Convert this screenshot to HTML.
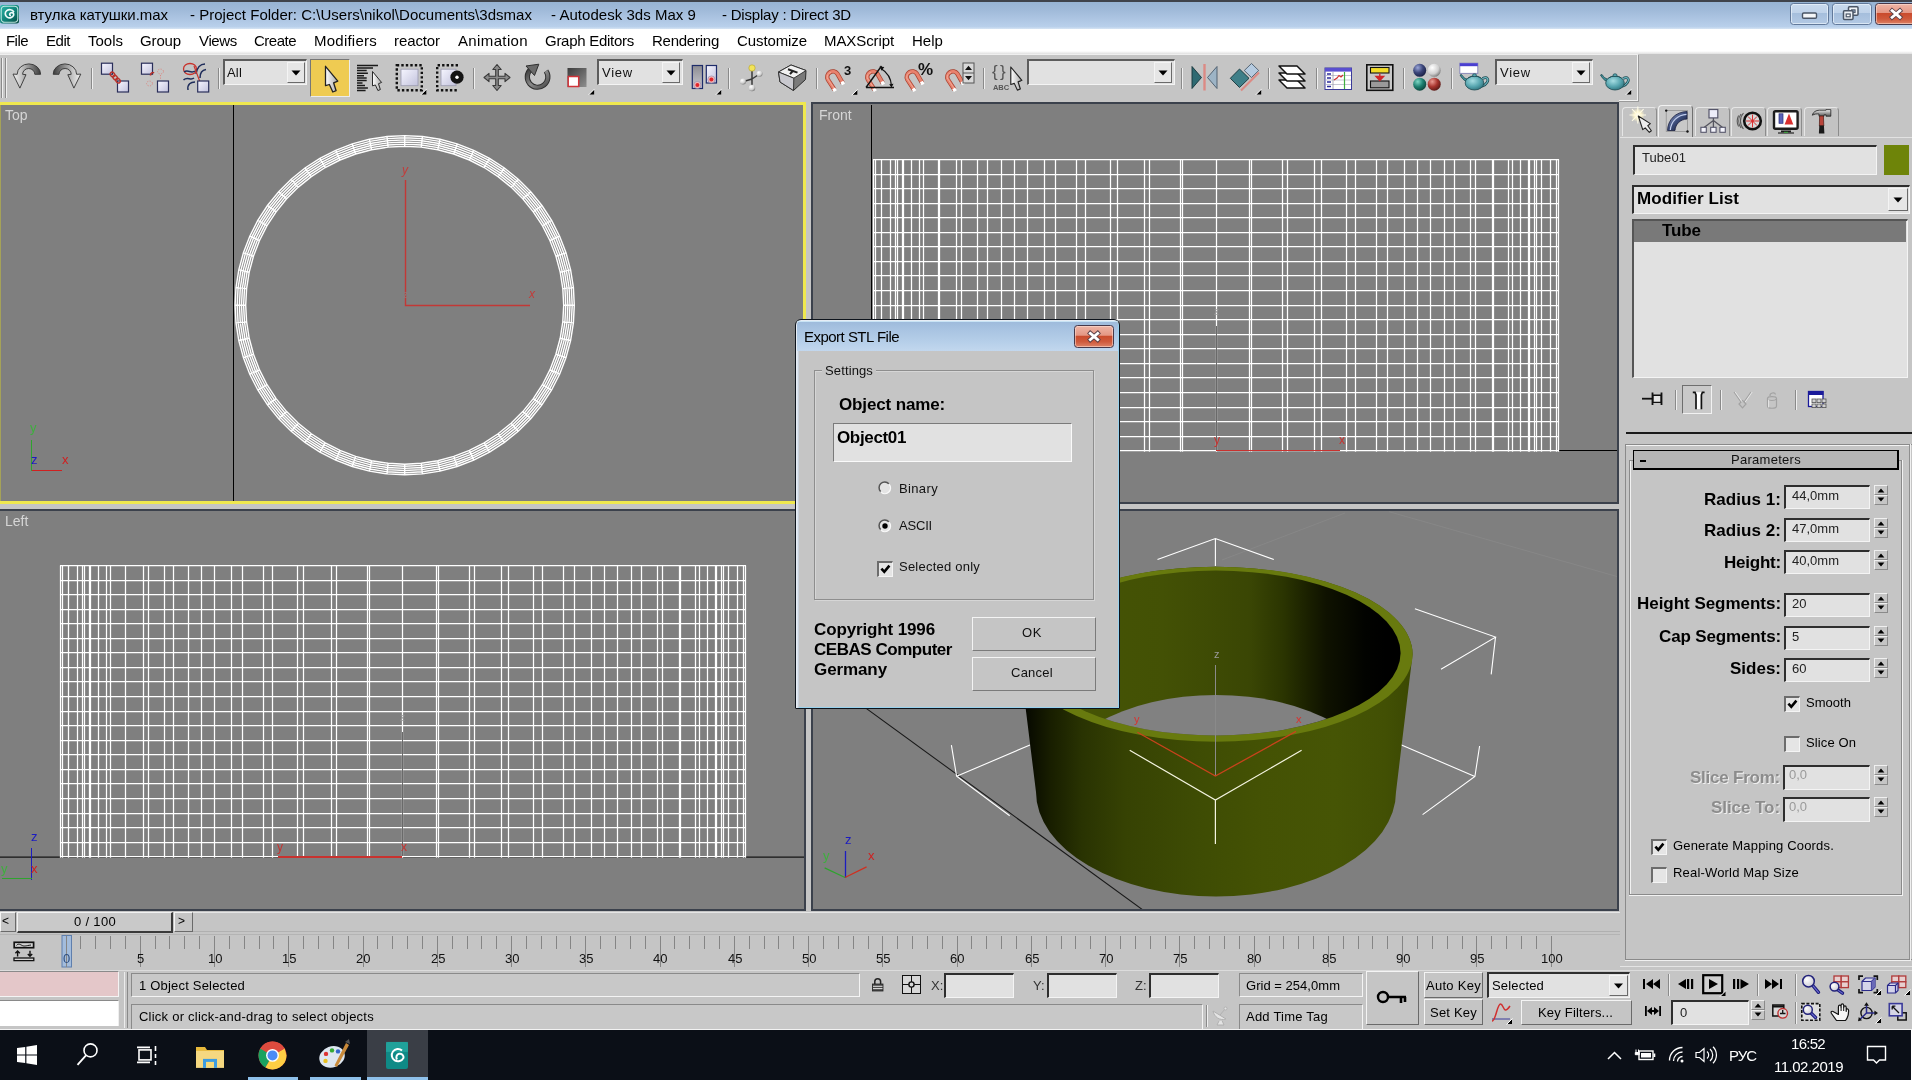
<!DOCTYPE html><html><head><meta charset="utf-8"><title>3ds Max</title><style>
html,body{margin:0;padding:0;}
body{width:1912px;height:1082px;overflow:hidden;position:relative;background:#c5c5c5;font-family:"Liberation Sans",sans-serif;}
.a{position:absolute;box-sizing:border-box;}
.t{position:absolute;white-space:nowrap;line-height:1;will-change:transform;}
svg{position:absolute;overflow:visible;}
.sunk{position:absolute;box-sizing:border-box;background:#e1e1e1;border-top:2px solid #2e2e2e;border-left:2px solid #2e2e2e;border-right:1px solid #f4f4f4;border-bottom:1px solid #f4f4f4;}
.raised{position:absolute;box-sizing:border-box;background:#c5c5c5;border-top:1px solid #f4f4f4;border-left:1px solid #f4f4f4;border-right:1px solid #6a6a6a;border-bottom:1px solid #6a6a6a;}
</style></head><body><div class="a" style="left:0px;top:0px;width:1912px;height:29px;background:linear-gradient(#95b2d2 0%,#a0bad9 35%,#afc7e4 70%,#b9d0eb 92%,#d6e4f3 100%);"></div>
<div class="a" style="left:0px;top:0px;width:1912px;height:1.6px;background:#3f434b;"></div>
<div class="a" style="left:0px;top:29px;width:1912px;height:25px;background:#ffffff;"></div>
<div class="a" style="left:0px;top:51px;width:1912px;height:3px;background:linear-gradient(#ffffff,#e0e0e0);"></div>
<div class="t" style="left:30px;top:7px;font-size:15px;color:#000;letter-spacing:-0.053px;">втулка катушки.max</div>
<div class="t" style="left:190px;top:7px;font-size:15px;color:#000;letter-spacing:0.020px;">- Project Folder: C:\Users\nikol\Documents\3dsmax</div>
<div class="t" style="left:551px;top:7px;font-size:15px;color:#000;letter-spacing:0.036px;">- Autodesk 3ds Max 9</div>
<div class="t" style="left:722px;top:7px;font-size:15px;color:#000;letter-spacing:-0.208px;">- Display : Direct 3D</div>
<div class="t" style="left:6px;top:33px;font-size:15px;color:#000;letter-spacing:-0.539px;">File</div>
<div class="t" style="left:46px;top:33px;font-size:15px;color:#000;letter-spacing:-0.461px;">Edit</div>
<div class="t" style="left:88px;top:33px;font-size:15px;color:#000;letter-spacing:-0.003px;">Tools</div>
<div class="t" style="left:140px;top:33px;font-size:15px;color:#000;letter-spacing:-0.141px;">Group</div>
<div class="t" style="left:199px;top:33px;font-size:15px;color:#000;letter-spacing:-0.347px;">Views</div>
<div class="t" style="left:254px;top:33px;font-size:15px;color:#000;letter-spacing:-0.505px;">Create</div>
<div class="t" style="left:314px;top:33px;font-size:15px;color:#000;letter-spacing:0.238px;">Modifiers</div>
<div class="t" style="left:394px;top:33px;font-size:15px;color:#000;letter-spacing:-0.100px;">reactor</div>
<div class="t" style="left:458px;top:33px;font-size:15px;color:#000;letter-spacing:0.366px;">Animation</div>
<div class="t" style="left:545px;top:33px;font-size:15px;color:#000;letter-spacing:-0.274px;">Graph Editors</div>
<div class="t" style="left:652px;top:33px;font-size:15px;color:#000;letter-spacing:-0.247px;">Rendering</div>
<div class="t" style="left:737px;top:33px;font-size:15px;color:#000;letter-spacing:-0.095px;">Customize</div>
<div class="t" style="left:824px;top:33px;font-size:15px;color:#000;letter-spacing:-0.094px;">MAXScript</div>
<div class="t" style="left:912px;top:33px;font-size:15px;color:#000;letter-spacing:0.039px;">Help</div>
<div class="a" style="left:-2px;top:102px;width:808px;height:402px;background:#7f7f7f;border:3px solid #efe84f;"></div>
<div class="a" style="left:0px;top:105px;width:1px;height:396px;background:#a5a258;"></div>
<div class="a" style="left:811px;top:102px;width:808px;height:402px;background:#7f7f7f;border:2px solid #3b414c;"></div>
<div class="a" style="left:-2px;top:509px;width:808px;height:402px;background:#7f7f7f;border:2px solid #3b414c;"></div>
<div class="a" style="left:811px;top:509px;width:808px;height:402px;background:#7f7f7f;border:2px solid #3b414c;"></div>
<div class="t" style="left:5px;top:108px;font-size:14px;color:#d6d6d6;">Top</div>
<div class="t" style="left:819px;top:108px;font-size:14px;color:#d6d6d6;">Front</div>
<div class="t" style="left:5px;top:514px;font-size:14px;color:#d6d6d6;">Left</div>
<svg style="left:2px;top:105px" width="801" height="396" viewBox="0 0 801 396" ><path d="M231.5 0V396" stroke="#000" stroke-width="1.4" shape-rendering="crispEdges"/><path d="M561.7 200.2L560.8 216.8L558.2 233.3L553.9 249.3L547.9 264.9L540.4 279.7L531.3 293.6L520.8 306.6L509.1 318.3L496.1 328.8L482.2 337.9L467.4 345.4L451.8 351.4L435.8 355.7L419.3 358.3L402.7 359.2L386.1 358.3L369.6 355.7L353.6 351.4L338.0 345.4L323.2 337.9L309.3 328.8L296.3 318.3L284.6 306.6L274.1 293.6L265.0 279.7L257.5 264.9L251.5 249.3L247.2 233.3L244.6 216.8L243.7 200.2L244.6 183.6L247.2 167.1L251.5 151.1L257.5 135.5L265.0 120.7L274.1 106.8L284.6 93.8L296.3 82.1L309.3 71.6L323.2 62.5L338.0 55.0L353.6 49.0L369.6 44.7L386.1 42.1L402.7 41.2L419.3 42.1L435.8 44.7L451.8 49.0L467.4 55.0L482.2 62.5L496.1 71.6L509.1 82.1L520.8 93.8L531.3 106.8L540.4 120.7L547.9 135.5L553.9 151.1L558.2 167.1L560.8 183.6ZM563.8 200.2L562.9 217.0L560.3 233.7L555.9 250.0L549.9 265.7L542.2 280.7L533.0 294.9L522.4 308.0L510.5 319.9L497.4 330.5L483.2 339.7L468.2 347.4L452.5 353.4L436.2 357.8L419.5 360.4L402.7 361.3L385.9 360.4L369.2 357.8L352.9 353.4L337.2 347.4L322.2 339.7L308.0 330.5L294.9 319.9L283.0 308.0L272.4 294.9L263.2 280.7L255.5 265.7L249.5 250.0L245.1 233.7L242.5 217.0L241.6 200.2L242.5 183.4L245.1 166.7L249.5 150.4L255.5 134.7L263.2 119.7L272.4 105.5L283.0 92.4L294.9 80.5L308.0 69.9L322.2 60.7L337.2 53.0L352.9 47.0L369.2 42.6L385.9 40.0L402.7 39.1L419.5 40.0L436.2 42.6L452.5 47.0L468.2 53.0L483.2 60.7L497.4 69.9L510.5 80.5L522.4 92.4L533.0 105.5L542.2 119.7L549.9 134.7L555.9 150.4L560.3 166.7L562.9 183.4ZM565.9 200.2L565.0 217.3L562.4 234.1L557.9 250.6L551.8 266.6L544.1 281.8L534.8 296.1L524.0 309.4L511.9 321.5L498.6 332.3L484.3 341.6L469.1 349.3L453.1 355.4L436.6 359.9L419.8 362.5L402.7 363.4L385.6 362.5L368.8 359.9L352.3 355.4L336.3 349.3L321.1 341.6L306.8 332.3L293.5 321.5L281.4 309.4L270.6 296.1L261.3 281.8L253.6 266.6L247.5 250.6L243.0 234.1L240.4 217.3L239.5 200.2L240.4 183.1L243.0 166.3L247.5 149.8L253.6 133.8L261.3 118.6L270.6 104.3L281.4 91.0L293.5 78.9L306.8 68.1L321.1 58.8L336.3 51.1L352.3 45.0L368.8 40.5L385.6 37.9L402.7 37.0L419.8 37.9L436.6 40.5L453.1 45.0L469.1 51.1L484.3 58.8L498.6 68.1L511.9 78.9L524.0 91.0L534.8 104.3L544.1 118.6L551.8 133.8L557.9 149.8L562.4 166.3L565.0 183.1ZM568.0 200.2L567.1 217.5L564.4 234.6L560.0 251.3L553.8 267.5L545.9 282.9L536.5 297.4L525.6 310.8L513.3 323.1L499.9 334.0L485.4 343.4L470.0 351.3L453.8 357.5L437.1 361.9L420.0 364.6L402.7 365.5L385.4 364.6L368.3 361.9L351.6 357.5L335.4 351.3L320.0 343.4L305.5 334.0L292.1 323.1L279.8 310.8L268.9 297.4L259.5 282.9L251.6 267.5L245.4 251.3L241.0 234.6L238.3 217.5L237.4 200.2L238.3 182.9L241.0 165.8L245.4 149.1L251.6 132.9L259.5 117.5L268.9 103.0L279.8 89.6L292.1 77.3L305.5 66.4L320.0 57.0L335.4 49.1L351.6 42.9L368.3 38.5L385.4 35.8L402.7 34.9L420.0 35.8L437.1 38.5L453.8 42.9L470.0 49.1L485.4 57.0L499.9 66.4L513.3 77.3L525.6 89.6L536.5 103.0L545.9 117.5L553.8 132.9L560.0 149.1L564.4 165.8L567.1 182.9ZM570.2 200.2L569.3 217.7L566.5 235.0L562.0 252.0L555.7 268.3L547.7 283.9L538.2 298.6L527.2 312.3L514.8 324.7L501.1 335.7L486.4 345.2L470.8 353.2L454.5 359.5L437.5 364.0L420.2 366.8L402.7 367.7L385.2 366.8L367.9 364.0L350.9 359.5L334.6 353.2L319.0 345.2L304.3 335.7L290.6 324.7L278.2 312.3L267.2 298.6L257.7 283.9L249.7 268.3L243.4 252.0L238.9 235.0L236.1 217.7L235.2 200.2L236.1 182.7L238.9 165.4L243.4 148.4L249.7 132.1L257.7 116.5L267.2 101.8L278.2 88.1L290.6 75.7L304.3 64.7L319.0 55.2L334.6 47.2L350.9 40.9L367.9 36.4L385.2 33.6L402.7 32.7L420.2 33.6L437.5 36.4L454.5 40.9L470.8 47.2L486.4 55.2L501.1 64.7L514.8 75.7L527.2 88.1L538.2 101.8L547.7 116.5L555.7 132.1L562.0 148.4L566.5 165.4L569.3 182.7ZM572.3 200.2L571.4 217.9L568.6 235.5L564.0 252.6L557.6 269.2L549.6 285.0L539.9 299.9L528.7 313.7L516.2 326.2L502.4 337.4L487.5 347.1L471.7 355.1L455.1 361.5L438.0 366.1L420.4 368.9L402.7 369.8L385.0 368.9L367.4 366.1L350.3 361.5L333.7 355.1L317.9 347.1L303.0 337.4L289.2 326.2L276.7 313.7L265.5 299.9L255.8 285.0L247.8 269.2L241.4 252.6L236.8 235.5L234.0 217.9L233.1 200.2L234.0 182.5L236.8 164.9L241.4 147.8L247.8 131.2L255.8 115.4L265.5 100.5L276.7 86.7L289.2 74.2L303.0 63.0L317.9 53.3L333.7 45.3L350.3 38.9L367.4 34.3L385.0 31.5L402.7 30.6L420.4 31.5L438.0 34.3L455.1 38.9L471.7 45.3L487.5 53.3L502.4 63.0L516.2 74.2L528.7 86.7L539.9 100.5L549.6 115.4L557.6 131.2L564.0 147.8L568.6 164.9L571.4 182.5ZM561.7 200.2L572.3 200.2M560.8 216.8L571.4 217.9M558.2 233.3L568.6 235.5M553.9 249.3L564.0 252.6M547.9 264.9L557.6 269.2M540.4 279.7L549.6 285.0M531.3 293.6L539.9 299.9M520.8 306.6L528.7 313.7M509.1 318.3L516.2 326.2M496.1 328.8L502.4 337.4M482.2 337.9L487.5 347.1M467.4 345.4L471.7 355.1M451.8 351.4L455.1 361.5M435.8 355.7L438.0 366.1M419.3 358.3L420.4 368.9M402.7 359.2L402.7 369.8M386.1 358.3L385.0 368.9M369.6 355.7L367.4 366.1M353.6 351.4L350.3 361.5M338.0 345.4L333.7 355.1M323.2 337.9L317.9 347.1M309.3 328.8L303.0 337.4M296.3 318.3L289.2 326.2M284.6 306.6L276.7 313.7M274.1 293.6L265.5 299.9M265.0 279.7L255.8 285.0M257.5 264.9L247.8 269.2M251.5 249.3L241.4 252.6M247.2 233.3L236.8 235.5M244.6 216.8L234.0 217.9M243.7 200.2L233.1 200.2M244.6 183.6L234.0 182.5M247.2 167.1L236.8 164.9M251.5 151.1L241.4 147.8M257.5 135.5L247.8 131.2M265.0 120.7L255.8 115.4M274.1 106.8L265.5 100.5M284.6 93.8L276.7 86.7M296.3 82.1L289.2 74.2M309.3 71.6L303.0 63.0M323.2 62.5L317.9 53.3M338.0 55.0L333.7 45.3M353.6 49.0L350.3 38.9M369.6 44.7L367.4 34.3M386.1 42.1L385.0 31.5M402.7 41.2L402.7 30.6M419.3 42.1L420.4 31.5M435.8 44.7L438.0 34.3M451.8 49.0L455.1 38.9M467.4 55.0L471.7 45.3M482.2 62.5L487.5 53.3M496.1 71.6L502.4 63.0M509.1 82.1L516.2 74.2M520.8 93.8L528.7 86.7M531.3 106.8L539.9 100.5M540.4 120.7L549.6 115.4M547.9 135.5L557.6 131.2M553.9 151.1L564.0 147.8M558.2 167.1L568.6 164.9M560.8 183.6L571.4 182.5" stroke="#fff" stroke-width="1.42" fill="none"/><path d="M403.5 75V200.5H528" stroke="#c23836" stroke-width="1.4" fill="none"/></svg>
<div class="t" style="left:402px;top:164px;font-size:12px;color:#c23c3a;font-style:italic;">y</div>
<div class="t" style="left:529px;top:288px;font-size:12px;color:#c23c3a;font-style:italic;">x</div>
<div class="t" style="left:403px;top:290px;font-size:10px;color:#8f7a7a;">z</div>
<svg style="left:0px;top:0px" width="100" height="500" viewBox="0 0 100 500" ><path d="M31.5 440V471" stroke="#2fa32f" stroke-width="1" shape-rendering="crispEdges"/><path d="M32 470.5H62" stroke="#d02020" stroke-width="1" shape-rendering="crispEdges"/></svg>
<div class="t" style="left:30px;top:421px;font-size:13px;color:#3fae3f;">y</div>
<div class="t" style="left:31px;top:453px;font-size:13px;color:#1c1cc0;">z</div>
<div class="t" style="left:62px;top:453px;font-size:13px;color:#d02020;">x</div>
<svg style="left:813px;top:105px" width="804" height="396" viewBox="0 0 804 396" ><path d="M58.5 0V396" stroke="#000" stroke-width="1.4" shape-rendering="crispEdges"/><path d="M58 345.5H804" stroke="#000" stroke-width="1.4" shape-rendering="crispEdges"/><path d="M60.5 54.5V346.7M62.5 54.5V346.7M68.5 54.5V346.7M77.5 54.5V346.7M82.5 54.5V346.7M84.5 54.5V346.7M89.5 54.5V346.7M90.5 54.5V346.7M98.5 54.5V346.7M106.5 54.5V346.7M110.5 54.5V346.7M125.5 54.5V346.7M126.5 54.5V346.7M143.5 54.5V346.7M148.5 54.5V346.7M164.5 54.5V346.7M174.5 54.5V346.7M188.5 54.5V346.7M201.5 54.5V346.7M214.5 54.5V346.7M231.5 54.5V346.7M242.5 54.5V346.7M263.5 54.5V346.7M272.5 54.5V346.7M297.5 54.5V346.7M304.5 54.5V346.7M331.5 54.5V346.7M336.5 54.5V346.7M367.5 54.5V346.7M369.5 54.5V346.7M403.5 54.5V346.7M436.5 54.5V346.7M438.5 54.5V346.7M469.5 54.5V346.7M474.5 54.5V346.7M501.5 54.5V346.7M508.5 54.5V346.7M533.5 54.5V346.7M542.5 54.5V346.7M563.5 54.5V346.7M574.5 54.5V346.7M591.5 54.5V346.7M604.5 54.5V346.7M617.5 54.5V346.7M631.5 54.5V346.7M641.5 54.5V346.7M657.5 54.5V346.7M662.5 54.5V346.7M679.5 54.5V346.7M680.5 54.5V346.7M695.5 54.5V346.7M699.5 54.5V346.7M707.5 54.5V346.7M715.5 54.5V346.7M716.5 54.5V346.7M721.5 54.5V346.7M723.5 54.5V346.7M728.5 54.5V346.7M737.5 54.5V346.7M743.5 54.5V346.7M745.5 54.5V346.7M60 54.5H746M60 69.5H746M60 83.5H746M60 98.5H746M60 112.5H746M60 127.5H746M60 141.5H746M60 156.5H746M60 170.5H746M60 185.5H746M60 200.5H746M60 214.5H746M60 229.5H746M60 243.5H746M60 258.5H746M60 272.5H746M60 287.5H746M60 302.5H746M60 316.5H746M60 331.5H746M60 345.5H746" stroke="#fff" stroke-width="1.25" fill="none"/><path d="M403.5 221V345" stroke="#6a6a6a" stroke-width="1" shape-rendering="crispEdges"/><path d="M403 345.5H527" stroke="#c8322f" stroke-width="1.4" shape-rendering="crispEdges"/></svg>
<div class="t" style="left:1214px;top:434px;font-size:12px;color:#c8322f;">y</div>
<div class="t" style="left:1339px;top:434px;font-size:12px;color:#c8322f;">x</div>
<div class="t" style="left:1214px;top:307px;font-size:10px;color:#9a9a9a;">z</div>
<svg style="left:0px;top:511px" width="804" height="398" viewBox="0 0 804 398" ><path d="M0 346.2H804" stroke="#151515" stroke-width="1.2"/><path d="M60.5 54.5V346.7M62.5 54.5V346.7M68.5 54.5V346.7M77.5 54.5V346.7M82.5 54.5V346.7M84.5 54.5V346.7M89.5 54.5V346.7M90.5 54.5V346.7M98.5 54.5V346.7M106.5 54.5V346.7M110.5 54.5V346.7M125.5 54.5V346.7M143.5 54.5V346.7M148.5 54.5V346.7M164.5 54.5V346.7M173.5 54.5V346.7M188.5 54.5V346.7M201.5 54.5V346.7M214.5 54.5V346.7M231.5 54.5V346.7M242.5 54.5V346.7M263.5 54.5V346.7M272.5 54.5V346.7M297.5 54.5V346.7M303.5 54.5V346.7M331.5 54.5V346.7M336.5 54.5V346.7M367.5 54.5V346.7M369.5 54.5V346.7M402.5 54.5V346.7M436.5 54.5V346.7M438.5 54.5V346.7M469.5 54.5V346.7M474.5 54.5V346.7M501.5 54.5V346.7M508.5 54.5V346.7M533.5 54.5V346.7M542.5 54.5V346.7M563.5 54.5V346.7M574.5 54.5V346.7M591.5 54.5V346.7M604.5 54.5V346.7M617.5 54.5V346.7M631.5 54.5V346.7M641.5 54.5V346.7M657.5 54.5V346.7M662.5 54.5V346.7M679.5 54.5V346.7M680.5 54.5V346.7M695.5 54.5V346.7M699.5 54.5V346.7M707.5 54.5V346.7M715.5 54.5V346.7M716.5 54.5V346.7M721.5 54.5V346.7M723.5 54.5V346.7M728.5 54.5V346.7M737.5 54.5V346.7M743.5 54.5V346.7M745.5 54.5V346.7M60 54.5H746M60 69.5H746M60 83.5H746M60 98.5H746M60 112.5H746M60 127.5H746M60 141.5H746M60 156.5H746M60 170.5H746M60 185.5H746M60 200.5H746M60 214.5H746M60 229.5H746M60 243.5H746M60 258.5H746M60 272.5H746M60 287.5H746M60 302.5H746M60 316.5H746M60 331.5H746M60 345.5H746" stroke="#fff" stroke-width="1.25" fill="none"/><path d="M402.5 221V345" stroke="#6a6a6a" stroke-width="1" shape-rendering="crispEdges"/><path d="M278 346H402" stroke="#c8322f" stroke-width="1.4" shape-rendering="crispEdges"/><path d="M31.5 337V369" stroke="#1c1cc0" stroke-width="1.3" shape-rendering="crispEdges"/><path d="M2 367.5H32" stroke="#2fa32f" stroke-width="1.3" shape-rendering="crispEdges"/></svg>
<div class="t" style="left:277px;top:841px;font-size:12px;color:#c8322f;">y</div>
<div class="t" style="left:401px;top:841px;font-size:12px;color:#c8322f;">x</div>
<div class="t" style="left:400px;top:713px;font-size:10px;color:#9a9a9a;">z</div>
<div class="t" style="left:31px;top:830px;font-size:13px;color:#1c1cc0;">z</div>
<div class="t" style="left:1px;top:862px;font-size:13px;color:#3fae3f;">y</div>
<div class="t" style="left:31px;top:862px;font-size:13px;color:#d02020;">x</div>
<svg style="left:813px;top:511px" width="804" height="398" viewBox="0 0 804 398" ><defs><linearGradient id="gOut" gradientUnits="userSpaceOnUse" x1="206" y1="0" x2="600" y2="0"><stop offset="0" stop-color="#000000"/><stop offset="0.03" stop-color="#0a0d00"/><stop offset="0.08" stop-color="#181e00"/><stop offset="0.16" stop-color="#293302"/><stop offset="0.27" stop-color="#364203"/><stop offset="0.45" stop-color="#3e4c04"/><stop offset="0.62" stop-color="#445204"/><stop offset="0.8" stop-color="#465505"/><stop offset="0.93" stop-color="#425004"/><stop offset="1" stop-color="#3b4803"/></linearGradient><linearGradient id="gIn" gradientUnits="userSpaceOnUse" x1="221" y1="0" x2="587" y2="0"><stop offset="0" stop-color="#465505"/><stop offset="0.35" stop-color="#435105"/><stop offset="0.59" stop-color="#3a4604"/><stop offset="0.68" stop-color="#2b3501"/><stop offset="0.749" stop-color="#1a2000"/><stop offset="0.798" stop-color="#0f1200"/><stop offset="0.904" stop-color="#020300"/><stop offset="0.96" stop-color="#000000"/><stop offset="1" stop-color="#000000"/></linearGradient><clipPath id="cIn"><ellipse cx="402.8" cy="142" rx="184.8" ry="82.4"/></clipPath><clipPath id="cVp"><rect x="0" y="0" width="804" height="398"/></clipPath></defs><g clip-path="url(#cVp)"><path d="M576.0 0.7 L804.0 65.5 M532.0 2.0 L409.0 49.0" stroke="#878787" stroke-width="1" fill="none"/><path d="M0.0 158.6 L332.0 400.5" stroke="#181818" stroke-width="1.05"/><path d="M344.5 48.5 L402.4 27.5 L460.8 48.5 M402.4 27.5 L402.4 55.0" stroke="#fff" stroke-width="1.1" fill="none"/><path d="M138.4 234.1 L143.6 265.3 L196.7 304.8 M143.6 265.3 L217.0 234.0" stroke="#fff" stroke-width="1.1" fill="none"/><path d="M601.9 97.8 L682.5 126.1 L628.0 158.3 M682.5 126.1 L678.2 163.4" stroke="#fff" stroke-width="1.1" fill="none"/><path d="M666.6 235.0 L661.9 265.5 L609.6 303.6 M661.9 265.5 L585.0 232.5" stroke="#fff" stroke-width="1.1" fill="none"/><path d="M206.0 143.2 L223.0 281.0 A180 104.4 0 0 0 583.0 281.0 L599.6 143.2 A196.8 87.5 0 0 0 206.0 143.2 Z" fill="url(#gOut)"/><ellipse cx="402.8" cy="143.2" rx="196.8" ry="87.5" fill="#687a0e"/><ellipse cx="402.8" cy="142" rx="184.8" ry="82.4" fill="url(#gIn)"/><ellipse cx="403" cy="280" rx="168" ry="96" fill="#818181" clip-path="url(#cIn)"/><path d="M402.5 154.0 L402.5 265.0" stroke="#8a8a8a" stroke-width="1"/><path d="M324.4 221.3 L402.4 265.0 L483.0 220.4" stroke="#c8431c" stroke-width="1.3" fill="none"/><path d="M316.7 239.3 L402.4 289.0 L488.6 239.3 M402.4 289.0 L402.4 333.0" stroke="#f4f4e0" stroke-width="1.2" fill="none"/><path d="M32.5 340.0 L32.5 367.0" stroke="#1c1cc0" stroke-width="1.3"/><path d="M32.0 366.5 L53.6 355.8" stroke="#d03020" stroke-width="1.3"/><path d="M32.0 366.5 L11.6 356.8" stroke="#2fa32f" stroke-width="1.3"/></g></svg>
<div class="t" style="left:1214px;top:649px;font-size:11px;color:#9a9a9a;">z</div>
<div class="t" style="left:1134px;top:714px;font-size:11px;color:#d8322f;">y</div>
<div class="t" style="left:1296px;top:714px;font-size:11px;color:#d8322f;">x</div>
<div class="t" style="left:845px;top:833px;font-size:13px;color:#1c1cc0;">z</div>
<div class="t" style="left:823px;top:849px;font-size:13px;color:#3fae3f;">y</div>
<div class="t" style="left:868px;top:849px;font-size:13px;color:#d02020;">x</div>
<div class="a" style="left:1626px;top:432px;width:286px;height:2px;background:#1a1a1a;"></div>
<div class="a" style="left:1622.1px;top:107px;width:35px;height:29px;background:#c3c3c3;border:1px solid #e6e6e6;border-right:1.5px solid #8c8c8c;border-bottom:none;border-radius:4px 4px 0 0;"></div>
<div class="a" style="left:1658.4px;top:104.5px;width:35px;height:32px;background:#c8c8c8;border:1px solid #f2f2f2;border-right:1.5px solid #6f6f6f;border-bottom:none;border-radius:4px 4px 0 0;"></div>
<div class="a" style="left:1694.7px;top:107px;width:35px;height:29px;background:#c3c3c3;border:1px solid #e6e6e6;border-right:1.5px solid #8c8c8c;border-bottom:none;border-radius:4px 4px 0 0;"></div>
<div class="a" style="left:1731px;top:107px;width:35px;height:29px;background:#c3c3c3;border:1px solid #e6e6e6;border-right:1.5px solid #8c8c8c;border-bottom:none;border-radius:4px 4px 0 0;"></div>
<div class="a" style="left:1767.3px;top:107px;width:35px;height:29px;background:#c3c3c3;border:1px solid #e6e6e6;border-right:1.5px solid #8c8c8c;border-bottom:none;border-radius:4px 4px 0 0;"></div>
<div class="a" style="left:1803.6px;top:107px;width:35px;height:29px;background:#c3c3c3;border:1px solid #e6e6e6;border-right:1.5px solid #8c8c8c;border-bottom:none;border-radius:4px 4px 0 0;"></div>
<div class="a" style="left:1620px;top:136.5px;width:292px;height:1px;background:#e2e2e2;"></div>
<div class="sunk" style="left:1633px;top:145px;width:244px;height:30px;background:#e1e1e1"></div>
<div class="t" style="left:1642px;top:151px;font-size:13px;color:#222;letter-spacing:0.062px;">Tube01</div>
<div class="a" style="left:1884px;top:145px;width:25px;height:30px;background:#6e8409;"></div>
<div class="sunk" style="left:1632px;top:185px;width:278px;height:29px;background:#e1e1e1"></div>
<div class="t" style="left:1637px;top:190px;font-size:17px;color:#000;font-weight:bold;letter-spacing:0.075px;">Modifier List</div>
<div class="raised" style="left:1888px;top:188px;width:20px;height:23px;background:#e6e6e6;"></div><svg style="left:1888px;top:188px" width="20" height="23" viewBox="0 0 20 23" ><path d="M5.5 9.5L14.5 9.5L10 14.5Z" fill="#000"/></svg>
<div class="a" style="left:1632px;top:219px;width:276px;height:159px;background:#e1e1e1;border-top:2px solid #555;border-left:2px solid #555;border-right:1px solid #f4f4f4;border-bottom:1px solid #f4f4f4;"></div>
<div class="a" style="left:1634px;top:221px;width:272px;height:21px;background:#797979;"></div>
<div class="t" style="left:1662px;top:222px;font-size:17px;color:#000;font-weight:bold;letter-spacing:-0.090px;">Tube</div>
<div class="a" style="left:1682px;top:385px;width:30px;height:29px;background:#c9c9c9;border-top:1px solid #6e6e6e;border-left:1px solid #6e6e6e;border-right:1px solid #f2f2f2;border-bottom:1px solid #f2f2f2;"></div>
<div class="a" style="left:1674.5px;top:390px;width:1px;height:20px;background:#8a8a8a;"></div>
<div class="a" style="left:1675.5px;top:390px;width:1px;height:20px;background:#efefef;"></div>
<div class="a" style="left:1720px;top:390px;width:1px;height:20px;background:#8a8a8a;"></div>
<div class="a" style="left:1721px;top:390px;width:1px;height:20px;background:#efefef;"></div>
<div class="a" style="left:1794.5px;top:390px;width:1px;height:20px;background:#8a8a8a;"></div>
<div class="a" style="left:1795.5px;top:390px;width:1px;height:20px;background:#efefef;"></div>
<div class="a" style="left:1625px;top:444px;width:290px;height:516px;background:transparent;border:1px solid #8a8a8a;border-right:none;"></div>
<div class="a" style="left:1626px;top:445px;width:284px;height:1px;background:#f2f2f2;"></div>
<div class="a" style="left:1909px;top:445px;width:1px;height:514px;background:#8f8f8f;"></div>
<div class="a" style="left:1910px;top:444px;width:1px;height:517px;background:#f0f0f0;"></div>
<div class="a" style="left:1625px;top:960px;width:286px;height:1px;background:#f0f0f0;"></div>
<div class="a" style="left:1620px;top:966px;width:292px;height:1px;background:#e4e4e4;"></div>
<div class="a" style="left:1629px;top:460px;width:273px;height:435px;background:transparent;border:1px solid #8a8a8a;"></div>
<div class="a" style="left:1630px;top:461px;width:1px;height:433px;background:#f2f2f2;"></div>
<div class="a" style="left:1629px;top:895px;width:274px;height:1px;background:#f2f2f2;"></div>
<div class="a" style="left:1902px;top:460px;width:1px;height:436px;background:#f2f2f2;"></div>
<div class="a" style="left:1633px;top:450px;width:266px;height:20px;background:#b5b5b5;border:1px solid #000;border-bottom:2px solid #000;border-right:2px solid #000;"></div>
<div class="t" style="left:1731px;top:453px;font-size:13px;color:#111;letter-spacing:0.280px;">Parameters</div>
<div class="a" style="left:1640px;top:460px;width:6px;height:1.5px;background:#000;"></div>
<div class="t" style="left:1704px;top:491px;font-size:17px;color:#000;font-weight:bold;letter-spacing:0.054px;">Radius 1:</div>
<div class="sunk" style="left:1784px;top:485px;width:86px;height:24px;background:#e1e1e1"></div>
<div class="t" style="left:1792px;top:489px;font-size:13px;color:#222;">44,0mm</div>
<div class="raised" style="left:1873.5px;top:485px;width:14px;height:10px;border-color:#f0f0f0 #8a8a8a #8a8a8a #f0f0f0;"></div><div class="raised" style="left:1873.5px;top:495px;width:14px;height:10px;border-color:#f0f0f0 #8a8a8a #8a8a8a #f0f0f0;"></div><svg style="left:1873.5px;top:485px" width="14" height="20" viewBox="0 0 14 20" ><path d="M3.6 7.4L7 3.6L10.4 7.4Z M3.6 12.6L7 16.4L10.4 12.6Z" fill="#000"/></svg>
<div class="t" style="left:1704px;top:521.5px;font-size:17px;color:#000;font-weight:bold;letter-spacing:0.054px;">Radius 2:</div>
<div class="sunk" style="left:1784px;top:518px;width:86px;height:24px;background:#e1e1e1"></div>
<div class="t" style="left:1792px;top:522px;font-size:13px;color:#222;">47,0mm</div>
<div class="raised" style="left:1873.5px;top:518px;width:14px;height:10px;border-color:#f0f0f0 #8a8a8a #8a8a8a #f0f0f0;"></div><div class="raised" style="left:1873.5px;top:528px;width:14px;height:10px;border-color:#f0f0f0 #8a8a8a #8a8a8a #f0f0f0;"></div><svg style="left:1873.5px;top:518px" width="14" height="20" viewBox="0 0 14 20" ><path d="M3.6 7.4L7 3.6L10.4 7.4Z M3.6 12.6L7 16.4L10.4 12.6Z" fill="#000"/></svg>
<div class="t" style="left:1724px;top:553.5px;font-size:17px;color:#000;font-weight:bold;letter-spacing:-0.221px;">Height:</div>
<div class="sunk" style="left:1784px;top:550px;width:86px;height:24px;background:#e1e1e1"></div>
<div class="t" style="left:1792px;top:554px;font-size:13px;color:#222;">40,0mm</div>
<div class="raised" style="left:1873.5px;top:550px;width:14px;height:10px;border-color:#f0f0f0 #8a8a8a #8a8a8a #f0f0f0;"></div><div class="raised" style="left:1873.5px;top:560px;width:14px;height:10px;border-color:#f0f0f0 #8a8a8a #8a8a8a #f0f0f0;"></div><svg style="left:1873.5px;top:550px" width="14" height="20" viewBox="0 0 14 20" ><path d="M3.6 7.4L7 3.6L10.4 7.4Z M3.6 12.6L7 16.4L10.4 12.6Z" fill="#000"/></svg>
<div class="t" style="left:1637px;top:595px;font-size:17px;color:#000;font-weight:bold;letter-spacing:-0.032px;">Height Segments:</div>
<div class="sunk" style="left:1784px;top:593px;width:86px;height:24px;background:#e1e1e1"></div>
<div class="t" style="left:1792px;top:597px;font-size:13px;color:#222;">20</div>
<div class="raised" style="left:1873.5px;top:593px;width:14px;height:10px;border-color:#f0f0f0 #8a8a8a #8a8a8a #f0f0f0;"></div><div class="raised" style="left:1873.5px;top:603px;width:14px;height:10px;border-color:#f0f0f0 #8a8a8a #8a8a8a #f0f0f0;"></div><svg style="left:1873.5px;top:593px" width="14" height="20" viewBox="0 0 14 20" ><path d="M3.6 7.4L7 3.6L10.4 7.4Z M3.6 12.6L7 16.4L10.4 12.6Z" fill="#000"/></svg>
<div class="t" style="left:1659px;top:627.5px;font-size:17px;color:#000;font-weight:bold;letter-spacing:-0.135px;">Cap Segments:</div>
<div class="sunk" style="left:1784px;top:626px;width:86px;height:24px;background:#e1e1e1"></div>
<div class="t" style="left:1792px;top:630px;font-size:13px;color:#222;">5</div>
<div class="raised" style="left:1873.5px;top:626px;width:14px;height:10px;border-color:#f0f0f0 #8a8a8a #8a8a8a #f0f0f0;"></div><div class="raised" style="left:1873.5px;top:636px;width:14px;height:10px;border-color:#f0f0f0 #8a8a8a #8a8a8a #f0f0f0;"></div><svg style="left:1873.5px;top:626px" width="14" height="20" viewBox="0 0 14 20" ><path d="M3.6 7.4L7 3.6L10.4 7.4Z M3.6 12.6L7 16.4L10.4 12.6Z" fill="#000"/></svg>
<div class="t" style="left:1730px;top:660px;font-size:17px;color:#000;font-weight:bold;letter-spacing:-0.003px;">Sides:</div>
<div class="sunk" style="left:1784px;top:658px;width:86px;height:24px;background:#e1e1e1"></div>
<div class="t" style="left:1792px;top:662px;font-size:13px;color:#222;">60</div>
<div class="raised" style="left:1873.5px;top:658px;width:14px;height:10px;border-color:#f0f0f0 #8a8a8a #8a8a8a #f0f0f0;"></div><div class="raised" style="left:1873.5px;top:668px;width:14px;height:10px;border-color:#f0f0f0 #8a8a8a #8a8a8a #f0f0f0;"></div><svg style="left:1873.5px;top:658px" width="14" height="20" viewBox="0 0 14 20" ><path d="M3.6 7.4L7 3.6L10.4 7.4Z M3.6 12.6L7 16.4L10.4 12.6Z" fill="#000"/></svg>
<div class="sunk" style="left:1784px;top:696px;width:16px;height:16px;background:#e5e5e5;border-top-color:#6c6c6c;border-left-color:#6c6c6c"></div><svg style="left:1784px;top:696px" width="16" height="16" viewBox="0 0 16 16" ><path d="M4.4 7.6L7.3 10.8L12.4 4.6" stroke="#000" stroke-width="2.6" fill="none"/></svg>
<div class="t" style="left:1806px;top:696px;font-size:13px;color:#000;letter-spacing:0.031px;">Smooth</div>
<div class="sunk" style="left:1784px;top:736px;width:16px;height:16px;background:#e5e5e5;border-top-color:#6c6c6c;border-left-color:#6c6c6c"></div>
<div class="t" style="left:1806px;top:736px;font-size:13px;color:#000;letter-spacing:0.107px;">Slice On</div>
<div class="t" style="left:1691px;top:769.5px;font-size:17px;color:#f0f0f0;font-weight:bold;letter-spacing:-0.233px;">Slice From:</div>
<div class="t" style="left:1690px;top:768.5px;font-size:17px;color:#8c8c8c;font-weight:bold;letter-spacing:-0.233px;">Slice From:</div>
<div class="sunk" style="left:1783px;top:765px;width:87px;height:25px;background:#e1e1e1"></div>
<div class="t" style="left:1789px;top:768px;font-size:13px;color:#9a9a9a;">0,0</div>
<div class="raised" style="left:1873.5px;top:765px;width:14px;height:10px;border-color:#f0f0f0 #8a8a8a #8a8a8a #f0f0f0;"></div><div class="raised" style="left:1873.5px;top:775px;width:14px;height:10px;border-color:#f0f0f0 #8a8a8a #8a8a8a #f0f0f0;"></div><svg style="left:1873.5px;top:765px" width="14" height="20" viewBox="0 0 14 20" ><path d="M3.6 7.4L7 3.6L10.4 7.4Z M3.6 12.6L7 16.4L10.4 12.6Z" fill="#000"/></svg>
<div class="t" style="left:1712px;top:800px;font-size:17px;color:#f0f0f0;font-weight:bold;letter-spacing:-0.064px;">Slice To:</div>
<div class="t" style="left:1711px;top:799px;font-size:17px;color:#8c8c8c;font-weight:bold;letter-spacing:-0.064px;">Slice To:</div>
<div class="sunk" style="left:1783px;top:797px;width:87px;height:25px;background:#e1e1e1"></div>
<div class="t" style="left:1789px;top:800px;font-size:13px;color:#9a9a9a;">0,0</div>
<div class="raised" style="left:1873.5px;top:797px;width:14px;height:10px;border-color:#f0f0f0 #8a8a8a #8a8a8a #f0f0f0;"></div><div class="raised" style="left:1873.5px;top:807px;width:14px;height:10px;border-color:#f0f0f0 #8a8a8a #8a8a8a #f0f0f0;"></div><svg style="left:1873.5px;top:797px" width="14" height="20" viewBox="0 0 14 20" ><path d="M3.6 7.4L7 3.6L10.4 7.4Z M3.6 12.6L7 16.4L10.4 12.6Z" fill="#000"/></svg>
<div class="sunk" style="left:1651px;top:839px;width:16px;height:16px;background:#e5e5e5;border-top-color:#6c6c6c;border-left-color:#6c6c6c"></div><svg style="left:1651px;top:839px" width="16" height="16" viewBox="0 0 16 16" ><path d="M4.4 7.6L7.3 10.8L12.4 4.6" stroke="#000" stroke-width="2.6" fill="none"/></svg>
<div class="t" style="left:1673px;top:839px;font-size:13px;color:#000;letter-spacing:0.173px;">Generate Mapping Coords.</div>
<div class="sunk" style="left:1651px;top:867px;width:16px;height:16px;background:#e5e5e5;border-top-color:#6c6c6c;border-left-color:#6c6c6c"></div>
<div class="t" style="left:1673px;top:866px;font-size:13px;color:#000;letter-spacing:0.178px;">Real-World Map Size</div>
<div class="raised" style="left:0px;top:912px;width:16px;height:20px;"></div>
<div class="t" style="left:2px;top:915px;font-size:12px;color:#000;">&lt;</div>
<div class="a" style="left:17px;top:912px;width:156px;height:21px;background:#c9c9c9;border-top:1px solid #f2f2f2;border-left:1px solid #f2f2f2;border-right:2px solid #3a3a3a;border-bottom:2px solid #3a3a3a;"></div>
<div class="t" style="left:74px;top:915px;font-size:13px;color:#000;letter-spacing:0.319px;">0 / 100</div>
<div class="raised" style="left:174px;top:912px;width:19px;height:20px;"></div>
<div class="t" style="left:178px;top:915px;font-size:12px;color:#000;">&gt;</div>
<div class="a" style="left:193px;top:912px;width:1427px;height:1px;background:#e6e6e6;"></div>
<div class="a" style="left:193px;top:931px;width:1427px;height:1px;background:#b0b0b0;"></div>
<div class="a" style="left:0px;top:934px;width:1620px;height:1px;background:#b4b4b4;"></div>
<svg style="left:0px;top:934px" width="1620" height="36" viewBox="0 0 1620 36" ><rect x="62" y="1.5" width="9.5" height="31.5" fill="#a3bcdc" stroke="#5f7fad" stroke-width="1"/><path d="M80.5 2V15M95.5 2V15M110.5 2V15M125.5 2V15M155.5 2V15M169.5 2V15M184.5 2V15M199.5 2V15M229.5 2V15M244.5 2V15M259.5 2V15M273.5 2V15M303.5 2V15M318.5 2V15M333.5 2V15M348.5 2V15M377.5 2V15M392.5 2V15M407.5 2V15M422.5 2V15M452.5 2V15M467.5 2V15M481.5 2V15M496.5 2V15M526.5 2V15M541.5 2V15M556.5 2V15M570.5 2V15M600.5 2V15M615.5 2V15M630.5 2V15M645.5 2V15M674.5 2V15M689.5 2V15M704.5 2V15M719.5 2V15M749.5 2V15M764.5 2V15M778.5 2V15M793.5 2V15M823.5 2V15M838.5 2V15M853.5 2V15M868.5 2V15M897.5 2V15M912.5 2V15M927.5 2V15M942.5 2V15M971.5 2V15M986.5 2V15M1001.5 2V15M1016.5 2V15M1046.5 2V15M1061.5 2V15M1075.5 2V15M1090.5 2V15M1120.5 2V15M1135.5 2V15M1150.5 2V15M1165.5 2V15M1194.5 2V15M1209.5 2V15M1224.5 2V15M1239.5 2V15M1269.5 2V15M1283.5 2V15M1298.5 2V15M1313.5 2V15M1343.5 2V15M1358.5 2V15M1372.5 2V15M1387.5 2V15M1417.5 2V15M1432.5 2V15M1447.5 2V15M1462.5 2V15M1491.5 2V15M1506.5 2V15M1521.5 2V15M1536.5 2V15" stroke="#858585" stroke-width="1" shape-rendering="crispEdges"/><path d="M66.5 2V33M140.5 2V33M214.5 2V33M288.5 2V33M363.5 2V33M437.5 2V33M511.5 2V33M585.5 2V33M660.5 2V33M734.5 2V33M808.5 2V33M882.5 2V33M957.5 2V33M1031.5 2V33M1105.5 2V33M1179.5 2V33M1254.5 2V33M1328.5 2V33M1402.5 2V33M1476.5 2V33M1551.5 2V33" stroke="#858585" stroke-width="1" shape-rendering="crispEdges"/></svg>
<div class="t" style="left:62.8828px;top:952px;font-size:13px;color:#2f4f80;">0</div>
<div class="t" style="left:137.143px;top:952px;font-size:13px;color:#111;">5</div>
<div class="t" style="left:207.786px;top:952px;font-size:13px;color:#111;">10</div>
<div class="t" style="left:282.046px;top:952px;font-size:13px;color:#111;">15</div>
<div class="t" style="left:356.306px;top:952px;font-size:13px;color:#111;">20</div>
<div class="t" style="left:430.566px;top:952px;font-size:13px;color:#111;">25</div>
<div class="t" style="left:504.826px;top:952px;font-size:13px;color:#111;">30</div>
<div class="t" style="left:579.086px;top:952px;font-size:13px;color:#111;">35</div>
<div class="t" style="left:653.346px;top:952px;font-size:13px;color:#111;">40</div>
<div class="t" style="left:727.606px;top:952px;font-size:13px;color:#111;">45</div>
<div class="t" style="left:801.866px;top:952px;font-size:13px;color:#111;">50</div>
<div class="t" style="left:876.126px;top:952px;font-size:13px;color:#111;">55</div>
<div class="t" style="left:950.386px;top:952px;font-size:13px;color:#111;">60</div>
<div class="t" style="left:1024.65px;top:952px;font-size:13px;color:#111;">65</div>
<div class="t" style="left:1098.91px;top:952px;font-size:13px;color:#111;">70</div>
<div class="t" style="left:1173.17px;top:952px;font-size:13px;color:#111;">75</div>
<div class="t" style="left:1247.43px;top:952px;font-size:13px;color:#111;">80</div>
<div class="t" style="left:1321.69px;top:952px;font-size:13px;color:#111;">85</div>
<div class="t" style="left:1395.95px;top:952px;font-size:13px;color:#111;">90</div>
<div class="t" style="left:1470.21px;top:952px;font-size:13px;color:#111;">95</div>
<div class="t" style="left:1540.85px;top:952px;font-size:13px;color:#111;">100</div>
<svg style="left:10px;top:938px" width="28" height="28" viewBox="0 0 28 28" ><g stroke="#111" fill="none"><rect x="4.2" y="4.3" width="19.4" height="5.4" fill="#d4d4d4" stroke-width="1.7"/><path d="M6.5 7.4c2-2.4 4-.6 6 .2s3 .2 8.5-.6" stroke-width="1"/><rect x="4" y="20" width="19.8" height="2.6" fill="#e0e0e0" stroke-width="1.3"/><path d="M7.6 18.4V13M5.4 15.2L7.6 12.9L9.8 15.2" stroke-width="1.4"/><path d="M20 12.8V18.2M17.8 16L20 18.3L22.2 16" stroke-width="1.4"/></g></svg>
<div class="a" style="left:0px;top:970px;width:1912px;height:1px;background:#dcdcdc;"></div>
<div class="a" style="left:0px;top:971px;width:119px;height:26px;background:#e4c7c9;border-top:1px solid #8a8a8a;border-bottom:1px solid #f4f4f4;border-right:1px solid #f4f4f4;"></div>
<div class="a" style="left:0px;top:1000px;width:119px;height:26px;background:#ffffff;border-top:1px solid #8a8a8a;border-right:1px solid #eee;"></div>
<div class="a" style="left:126.5px;top:972px;width:1.5px;height:56px;background:#8a8a8a;"></div>
<div class="a" style="left:124px;top:972px;width:1px;height:56px;background:#ececec;"></div>
<div class="a" style="left:131px;top:973px;width:729px;height:24px;background:#c8c8c8;border-top:1px solid #8a8a8a;border-left:1px solid #8a8a8a;border-right:1px solid #f4f4f4;border-bottom:1px solid #f4f4f4;"></div>
<div class="t" style="left:139px;top:979px;font-size:13px;color:#000;letter-spacing:0.198px;">1 Object Selected</div>
<div class="a" style="left:131px;top:1004px;width:1072px;height:25px;background:#c8c8c8;border-top:1px solid #8a8a8a;border-left:1px solid #8a8a8a;border-right:1px solid #f4f4f4;"></div>
<div class="t" style="left:139px;top:1010px;font-size:13px;color:#000;letter-spacing:0.232px;">Click or click-and-drag to select objects</div>
<svg style="left:870px;top:975px" width="16" height="20" viewBox="0 0 16 20" ><path d="M4.8 9V6.6a2.9 2.9 0 0 1 5.8 0V9" stroke="#222" stroke-width="1.5" fill="none"/><rect x="2.4" y="9" width="10.6" height="7" fill="#4a4a4a" stroke="#222" stroke-width=".8"/><path d="M3 11.3H12.5M3 13.6H12.5" stroke="#e2e2e2" stroke-width="1"/></svg>
<div class="a" style="left:902px;top:975px;width:19px;height:19px;background:#d8d8d8;border:1.5px solid #111;"></div>
<svg style="left:902px;top:975px" width="19" height="19" viewBox="0 0 19 19" ><path d="M9.5 1V18M1 9.5H18" stroke="#111" stroke-width="1"/><circle cx="9.5" cy="9.5" r="2.6" fill="#d8d8d8" stroke="#111" stroke-width="1.4"/></svg>
<div class="t" style="left:931px;top:979px;font-size:13px;color:#333;">X:</div>
<div class="sunk" style="left:944px;top:973px;width:70px;height:25px;background:#e1e1e1"></div>
<div class="t" style="left:1033px;top:979px;font-size:13px;color:#333;">Y:</div>
<div class="sunk" style="left:1047px;top:973px;width:70px;height:25px;background:#e1e1e1"></div>
<div class="t" style="left:1135px;top:979px;font-size:13px;color:#333;">Z:</div>
<div class="sunk" style="left:1149px;top:973px;width:70px;height:25px;background:#e1e1e1"></div>
<div class="a" style="left:1239px;top:973px;width:124px;height:24px;background:#c8c8c8;border-top:1px solid #8a8a8a;border-left:1px solid #8a8a8a;border-right:1px solid #f4f4f4;border-bottom:1px solid #f4f4f4;"></div>
<div class="t" style="left:1246px;top:979px;font-size:13px;color:#000;letter-spacing:0.030px;">Grid = 254,0mm</div>
<div class="a" style="left:1239px;top:1004px;width:124px;height:25px;background:#c8c8c8;border-top:1px solid #8a8a8a;border-left:1px solid #8a8a8a;border-right:1px solid #f4f4f4;"></div>
<div class="t" style="left:1246px;top:1010px;font-size:13px;color:#000;letter-spacing:0.228px;">Add Time Tag</div>
<div class="a" style="left:1206px;top:1005px;width:1px;height:22px;background:#8a8a8a;"></div>
<div class="a" style="left:1207px;top:1005px;width:1px;height:22px;background:#efefef;"></div>
<div class="raised" style="left:1366px;top:971px;width:53px;height:54px;"></div>
<svg style="left:1376px;top:986px" width="34" height="24" viewBox="0 0 34 24" ><circle cx="7" cy="11" r="5" fill="none" stroke="#000" stroke-width="2.4"/><path d="M12 11H30M25 11V17M29 11V16" stroke="#000" stroke-width="2.6" fill="none"/></svg>
<div class="raised" style="left:1424px;top:972px;width:59px;height:26px;"></div>
<div class="t" style="left:1426px;top:979px;font-size:13px;color:#000;letter-spacing:0.279px;">Auto Key</div>
<div class="raised" style="left:1424px;top:999px;width:59px;height:26px;"></div>
<div class="t" style="left:1430px;top:1006px;font-size:13px;color:#000;letter-spacing:0.210px;">Set Key</div>
<div class="sunk" style="left:1487px;top:972px;width:143px;height:26px;background:#e1e1e1"></div>
<div class="t" style="left:1492px;top:979px;font-size:13px;color:#000;letter-spacing:0.174px;">Selected</div>
<div class="raised" style="left:1609px;top:975px;width:19px;height:21px;background:#e6e6e6;"></div><svg style="left:1609px;top:975px" width="19" height="21" viewBox="0 0 19 21" ><path d="M5 8.5L14 8.5L9.5 13.5Z" fill="#000"/></svg>
<div class="raised" style="left:1521px;top:1000px;width:111px;height:25px;"></div>
<div class="t" style="left:1538px;top:1006px;font-size:13px;color:#000;letter-spacing:0.198px;">Key Filters...</div>
<svg style="left:1641px;top:974px" width="150" height="22" viewBox="0 0 150 22" ><g fill="#000"><rect x="2" y="5" width="2" height="10"/><path d="M12 5V15L5 10Z M19 5V15L12 10Z"/><path d="M45 5V15L37 10Z"/><rect x="46" y="5" width="2.2" height="10"/><rect x="50" y="5" width="2.2" height="10"/><rect x="62.2" y="1.2" width="19" height="18" fill="#d0d0d0" stroke="#000" stroke-width="2.2"/><path d="M68 5V15L77 10Z"/><rect x="92" y="5" width="2.2" height="10"/><rect x="96" y="5" width="2.2" height="10"/><path d="M99.5 5V15L108 10Z"/><path d="M124 5V15L131 10Z M131 5V15L138 10Z"/><rect x="139" y="5" width="2" height="10"/></g></svg>
<div class="a" style="left:1668px;top:974px;width:1px;height:22px;background:#8a8a8a;"></div>
<div class="a" style="left:1669px;top:974px;width:1px;height:22px;background:#efefef;"></div>
<div class="a" style="left:1757px;top:974px;width:1px;height:22px;background:#8a8a8a;"></div>
<div class="a" style="left:1758px;top:974px;width:1px;height:22px;background:#efefef;"></div>
<div class="a" style="left:1795px;top:974px;width:1px;height:22px;background:#8a8a8a;"></div>
<div class="a" style="left:1796px;top:974px;width:1px;height:22px;background:#efefef;"></div>
<svg style="left:1644px;top:1003px" width="20" height="18" viewBox="0 0 20 18" ><g fill="#000"><rect x="1" y="3" width="1.8" height="10"/><path d="M3 8L8 4V12Z M15 8L10 4V12Z"/><rect x="15.2" y="3" width="1.8" height="10"/><rect x="8" y="7" width="2" height="2"/></g></svg>
<div class="sunk" style="left:1671px;top:1000px;width:78px;height:25px;background:#e1e1e1"></div>
<div class="t" style="left:1680px;top:1006px;font-size:13px;color:#222;">0</div>
<div class="raised" style="left:1750.5px;top:1000px;width:14px;height:10px;border-color:#f0f0f0 #8a8a8a #8a8a8a #f0f0f0;"></div><div class="raised" style="left:1750.5px;top:1010px;width:14px;height:10px;border-color:#f0f0f0 #8a8a8a #8a8a8a #f0f0f0;"></div><svg style="left:1750.5px;top:1000px" width="14" height="20" viewBox="0 0 14 20" ><path d="M3.6 7.4L7 3.6L10.4 7.4Z M3.6 12.6L7 16.4L10.4 12.6Z" fill="#000"/></svg>
<div class="a" style="left:1795px;top:1002px;width:1px;height:22px;background:#8a8a8a;"></div>
<div class="a" style="left:1796px;top:1002px;width:1px;height:22px;background:#efefef;"></div>
<div class="a" style="left:0px;top:1030px;width:1911px;height:50px;background:#0b0f17;"></div>
<div class="a" style="left:0px;top:1079.5px;width:1912px;height:3px;background:#ffffff;"></div>
<div class="a" style="left:1911px;top:1030px;width:1px;height:52px;background:#ffffff;"></div>
<div class="a" style="left:0px;top:1029px;width:1912px;height:1px;background:#f2f2f2;"></div>
<div class="a" style="left:367px;top:1030px;width:61px;height:50px;background:#3a3e46;"></div>
<div class="a" style="left:248px;top:1076.5px;width:50px;height:3px;background:#8ec0ea;"></div>
<div class="a" style="left:310px;top:1076.5px;width:51px;height:3px;background:#8ec0ea;"></div>
<div class="a" style="left:367px;top:1076.5px;width:61px;height:3px;background:#8ec0ea;"></div>
<svg style="left:0px;top:0px" width="1912" height="1082" viewBox="0 0 1912 1082" ><g transform="translate(0 0.9)"><path d="M17 1047.2L25.2 1046V1053.5H17Z M26.4 1045.8L37 1044.2V1053.5H26.4Z M17 1054.7H25.2V1062.2L17 1061Z M26.4 1054.7H37V1064L26.4 1062.4Z" fill="#fff"/><circle cx="90.5" cy="1049.5" r="6.5" fill="none" stroke="#fff" stroke-width="1.6"/><path d="M86 1054.5L77.5 1064" stroke="#fff" stroke-width="1.8"/><g stroke="#fff" stroke-width="1.6" fill="none"><rect x="139" y="1049" width="12" height="10"/><path d="M137 1046.5H150M137 1061.5H150M155.5 1045V1050M155.5 1053V1057M155.5 1060V1064"/></g><path d="M196 1046h9l2 3h17v3h-28z" fill="#e8b93b"/><rect x="196" y="1050" width="28" height="17" fill="#f6d880"/><path d="M203 1067V1058h14v9z" fill="#3d9ce0"/><rect x="206" y="1061" width="8" height="6" fill="#f7d978"/><circle cx="272.5" cy="1054.5" r="14" fill="#dd4b3e"/><path d="M272.5 1054.5L260.4 1047.5A14 14 0 0 0 265.5 1066.6Z" fill="#1aa260"/><path d="M272.5 1054.5L265.5 1066.6A14 14 0 0 0 286.5 1054.5L284.6 1047.5Z" fill="#ffce44"/><path d="M272.5 1054.5L284.6 1047.5A14 14 0 0 0 260.4 1047.5Z" fill="#dd4b3e"/><circle cx="272.5" cy="1054.5" r="6.4" fill="#fff"/><circle cx="272.5" cy="1054.5" r="5" fill="#4c8bf5"/><ellipse cx="332" cy="1056" rx="13" ry="10.5" fill="#dde6f0" transform="rotate(-20 332 1056)"/><circle cx="326" cy="1053" r="2.2" fill="#d33"/><circle cx="332" cy="1049.5" r="2.2" fill="#3a3"/><circle cx="338" cy="1050.5" r="2.2" fill="#36c"/><circle cx="325.5" cy="1060" r="2.2" fill="#e9c020"/><path d="M346 1042L349 1044L337 1066L334.5 1064.5Z" fill="#c98a3a"/><path d="M345 1041l4-3 1 5z" fill="#555"/><rect x="386" y="1041" width="22" height="27" rx="2" fill="#0f8a86"/><path d="M386 1041h22v10h-22z" fill="#2cb0a8" opacity=".6"/><path d="M402 1049.5a6.2 6.2 0 1 0 1.5 7.5a3.6 3.6 0 1 0 -6.4 1.6" stroke="#fff" stroke-width="2" fill="none"/></g><path d="M1608 1059L1614.5 1052.5L1621 1059" stroke="#fff" stroke-width="1.5" fill="none"/><rect x="1639" y="1051" width="14" height="8.5" fill="none" stroke="#fff" stroke-width="1.4"/><rect x="1641" y="1053" width="10" height="4.5" fill="#fff"/><rect x="1653.5" y="1053.5" width="1.8" height="3.5" fill="#fff"/><path d="M1636 1049.5v3M1638.5 1049.5v3M1635.3 1052.5h4v2.2h-4z" stroke="#fff" stroke-width="1" fill="#fff"/><g stroke="#fff" fill="none" stroke-width="1.3"><path d="M1669.5 1060.5a13 13 0 0 1 13-13"/><path d="M1673.5 1061a9 9 0 0 1 9-9"/><path d="M1677.5 1061.5a5 5 0 0 1 5-5"/></g><circle cx="1682" cy="1061" r="1.5" fill="#fff"/><path d="M1696 1052.5h3.5l4.5-4v13l-4.5-4H1696z" stroke="#fff" stroke-width="1.2" fill="none"/><path d="M1707 1051.5a4.5 4.5 0 0 1 0 7M1710 1049a8 8 0 0 1 0 12M1713 1046.8a11.5 11.5 0 0 1 0 16.4" stroke="#fff" stroke-width="1.2" fill="none"/><path d="M1867.5 1046.5h18v13.5h-6l-3 3l-3-3h-6z" stroke="#fff" stroke-width="1.4" fill="none"/></svg>
<div class="t" style="left:1729px;top:1048px;font-size:15px;color:#fff;letter-spacing:-1.010px;">РУС</div>
<div class="t" style="left:1791px;top:1036px;font-size:15px;color:#fff;letter-spacing:-0.709px;">16:52</div>
<div class="t" style="left:1774px;top:1059px;font-size:15px;color:#fff;letter-spacing:-0.498px;">11.02.2019</div>
<div class="a" style="left:1790px;top:3px;width:39px;height:22px;background:linear-gradient(#c9daee 0%,#bfd2e9 45%,#a5bedc 46%,#b3c9e4 100%);border:1px solid #62799a;border-radius:3.5px;box-shadow:inset 0 0 0 1px rgba(235,244,252,.7);"></div>
<div class="a" style="left:1832px;top:3px;width:40px;height:22px;background:linear-gradient(#c9daee 0%,#bfd2e9 45%,#a5bedc 46%,#b3c9e4 100%);border:1px solid #62799a;border-radius:3.5px;box-shadow:inset 0 0 0 1px rgba(235,244,252,.7);"></div>
<svg style="left:1790px;top:3px" width="39" height="22" viewBox="0 0 39 22" ><rect x="12.5" y="10" width="14" height="5.2" rx="1.2" fill="#f4f6f8" stroke="#4a5566" stroke-width="1.4"/></svg>
<svg style="left:1832px;top:3px" width="40" height="22" viewBox="0 0 40 22" ><rect x="16.5" y="3.8" width="9.5" height="8.5" rx="1" fill="#f1f4f8" stroke="#4a5566" stroke-width="1.5"/><rect x="19.5" y="6.8" width="3.6" height="2.8" fill="#8fa3bd" stroke="#4a5566" stroke-width="1"/><rect x="11.5" y="7.8" width="9.5" height="8.8" rx="1" fill="#eef2f7" stroke="#4a5566" stroke-width="1.5"/><rect x="14.2" y="11" width="4" height="2.8" fill="#fff" stroke="#4a5566" stroke-width="1.2"/></svg>
<div class="a" style="left:1875px;top:3px;width:42px;height:22px;background:linear-gradient(#eeb5a6 0%,#e49683 45%,#c94a2c 46%,#cf5a3c 75%,#dd8268 100%);border:1px solid #47394a;border-radius:3.5px;box-shadow:inset 0 0 0 1px rgba(255,225,215,.55);"></div><svg style="left:1875px;top:3px" width="42" height="22" viewBox="0 0 42 22" ><path d="M17.1 7.685L24.9 14.315M24.9 7.685L17.1 14.315" stroke="#5a4048" stroke-width="4.6" stroke-linecap="square" fill="none"/><path d="M17.1 7.685L24.9 14.315M24.9 7.685L17.1 14.315" stroke="#fff" stroke-width="2.8" stroke-linecap="square" fill="none"/></svg>
<svg style="left:0px;top:5px" width="20" height="19" viewBox="0 0 20 19" ><defs><linearGradient id="gApp" x1="0" y1="0" x2="1" y2="1"><stop offset="0" stop-color="#2fb9ac"/><stop offset=".55" stop-color="#0f8076"/><stop offset="1" stop-color="#06483f"/></linearGradient></defs><rect x="0" y="0" width="19" height="18.5" rx="2.5" fill="url(#gApp)"/><rect x="1.2" y="1.2" width="16.6" height="16.1" rx="3.5" fill="none" stroke="#d8f4ef" stroke-width="1.1" opacity=".85"/><path d="M13.6 6.6C12.4 4.6 9 4 6.8 5.6C4.6 7.2 4.8 10.6 7.2 12.1C9.4 13.5 12.8 12.7 13.6 10.3C14.2 8.5 12.6 7.3 11 7.7C9.7 8.1 9.2 9.6 10.2 10.4" stroke="#eefcfa" stroke-width="1.7" fill="none" stroke-linecap="round"/></svg>
<div class="a" style="left:0px;top:54px;width:1638px;height:1px;background:#efefef;"></div>
<div class="a" style="left:1637px;top:55px;width:1px;height:46px;background:#f2f2f2;"></div>
<div class="a" style="left:1638px;top:55px;width:1px;height:47px;background:#9a9a9a;"></div>
<div class="a" style="left:1619px;top:100px;width:19px;height:1px;background:#f2f2f2;"></div>
<div class="a" style="left:1619px;top:101px;width:20px;height:1px;background:#9a9a9a;"></div>
<div class="a" style="left:1px;top:58px;width:1px;height:40px;background:#8a8a8a;"></div>
<div class="a" style="left:2px;top:58px;width:1px;height:40px;background:#efefef;"></div>
<div class="a" style="left:5px;top:58px;width:1px;height:40px;background:#8a8a8a;"></div>
<div class="a" style="left:6px;top:58px;width:1px;height:40px;background:#efefef;"></div>
<div class="a" style="left:91px;top:68px;width:1px;height:21px;background:#8a8a8a;"></div><div class="a" style="left:92px;top:68px;width:1px;height:21px;background:#efefef;"></div>
<div class="a" style="left:218px;top:68px;width:1px;height:21px;background:#8a8a8a;"></div><div class="a" style="left:219px;top:68px;width:1px;height:21px;background:#efefef;"></div>
<div class="a" style="left:473px;top:68px;width:1px;height:21px;background:#8a8a8a;"></div><div class="a" style="left:474px;top:68px;width:1px;height:21px;background:#efefef;"></div>
<div class="a" style="left:728px;top:68px;width:1px;height:21px;background:#8a8a8a;"></div><div class="a" style="left:729px;top:68px;width:1px;height:21px;background:#efefef;"></div>
<div class="a" style="left:816px;top:68px;width:1px;height:21px;background:#8a8a8a;"></div><div class="a" style="left:817px;top:68px;width:1px;height:21px;background:#efefef;"></div>
<div class="a" style="left:983px;top:68px;width:1px;height:21px;background:#8a8a8a;"></div><div class="a" style="left:984px;top:68px;width:1px;height:21px;background:#efefef;"></div>
<div class="a" style="left:1181px;top:68px;width:1px;height:21px;background:#8a8a8a;"></div><div class="a" style="left:1182px;top:68px;width:1px;height:21px;background:#efefef;"></div>
<div class="a" style="left:1268px;top:68px;width:1px;height:21px;background:#8a8a8a;"></div><div class="a" style="left:1269px;top:68px;width:1px;height:21px;background:#efefef;"></div>
<div class="a" style="left:1316px;top:68px;width:1px;height:21px;background:#8a8a8a;"></div><div class="a" style="left:1317px;top:68px;width:1px;height:21px;background:#efefef;"></div>
<div class="a" style="left:1403px;top:68px;width:1px;height:21px;background:#8a8a8a;"></div><div class="a" style="left:1404px;top:68px;width:1px;height:21px;background:#efefef;"></div>
<div class="a" style="left:1451px;top:68px;width:1px;height:21px;background:#8a8a8a;"></div><div class="a" style="left:1452px;top:68px;width:1px;height:21px;background:#efefef;"></div>
<div class="sunk" style="left:223px;top:59px;width:84px;height:26px;background:#e1e1e1;border-top-color:#5c5c5c;border-left-color:#5c5c5c"></div>
<div class="t" style="left:227px;top:66px;font-size:13px;color:#111;letter-spacing:0.182px;">All</div>
<div class="raised" style="left:287px;top:62px;width:18px;height:21px;background:#e6e6e6;"></div><svg style="left:287px;top:62px" width="18" height="21" viewBox="0 0 18 21" ><path d="M4.5 8.5L13.5 8.5L9 13.5Z" fill="#000"/></svg>
<div class="sunk" style="left:597px;top:59px;width:86px;height:26px;background:#e1e1e1;border-top-color:#5c5c5c;border-left-color:#5c5c5c"></div>
<div class="t" style="left:602px;top:66px;font-size:13px;color:#111;letter-spacing:0.762px;">View</div>
<div class="raised" style="left:662px;top:62px;width:18px;height:21px;background:#e6e6e6;"></div><svg style="left:662px;top:62px" width="18" height="21" viewBox="0 0 18 21" ><path d="M4.5 8.5L13.5 8.5L9 13.5Z" fill="#000"/></svg>
<div class="sunk" style="left:1027px;top:59px;width:148px;height:26px;background:#e1e1e1;border-top-color:#5c5c5c;border-left-color:#5c5c5c"></div>
<div class="raised" style="left:1154px;top:62px;width:18px;height:21px;background:#e6e6e6;"></div><svg style="left:1154px;top:62px" width="18" height="21" viewBox="0 0 18 21" ><path d="M4.5 8.5L13.5 8.5L9 13.5Z" fill="#000"/></svg>
<div class="sunk" style="left:1495px;top:59px;width:98px;height:26px;background:#e1e1e1;border-top-color:#5c5c5c;border-left-color:#5c5c5c"></div>
<div class="t" style="left:1500px;top:66px;font-size:13px;color:#111;letter-spacing:0.762px;">View</div>
<div class="raised" style="left:1572px;top:62px;width:18px;height:21px;background:#e6e6e6;"></div><svg style="left:1572px;top:62px" width="18" height="21" viewBox="0 0 18 21" ><path d="M4.5 8.5L13.5 8.5L9 13.5Z" fill="#000"/></svg>
<div class="a" style="left:309.5px;top:59px;width:40px;height:38px;background:#efcb52;border-top:1.2px solid #777;border-left:1.2px solid #777;border-right:1.6px solid #ececec;border-bottom:1.4px solid #ececec;"></div>
<svg style="left:0px;top:0px" width="1912" height="110" viewBox="0 0 1912 110" ><defs><linearGradient id="gSq" x1="0" y1="0" x2="1" y2="1"><stop offset="0" stop-color="#f6f6ff"/><stop offset="1" stop-color="#c2c2dc"/></linearGradient><linearGradient id="gArr" gradientUnits="userSpaceOnUse" x1="13" y1="0" x2="41" y2="0"><stop offset="0" stop-color="#f2f2f2"/><stop offset=".3" stop-color="#c4c4c4"/><stop offset=".6" stop-color="#8a8a8a"/><stop offset="1" stop-color="#3a3a3a"/></linearGradient><linearGradient id="gMag" x1="0" y1="0" x2="1" y2="0"><stop offset="0" stop-color="#f4a58c"/><stop offset=".5" stop-color="#e8694a"/><stop offset="1" stop-color="#c8452c"/></linearGradient><linearGradient id="gCur" x1="0" y1="0" x2="1" y2="0"><stop offset="0" stop-color="#ffffff"/><stop offset="1" stop-color="#a9a9a9"/></linearGradient><radialGradient id="gTea" cx=".4" cy=".35" r=".75"><stop offset="0" stop-color="#a6dde2"/><stop offset=".55" stop-color="#56a5af"/><stop offset="1" stop-color="#2a6a74"/></radialGradient><radialGradient id="gB1" cx=".35" cy=".3" r=".8"><stop offset="0" stop-color="#9aa6d8"/><stop offset=".5" stop-color="#3a4478"/><stop offset="1" stop-color="#141a3a"/></radialGradient><radialGradient id="gB2" cx=".35" cy=".3" r=".8"><stop offset="0" stop-color="#ffffff"/><stop offset=".6" stop-color="#cfcfcf"/><stop offset="1" stop-color="#6a6a6a"/></radialGradient><radialGradient id="gB3" cx=".35" cy=".3" r=".8"><stop offset="0" stop-color="#7fd8c6"/><stop offset=".5" stop-color="#1f7f70"/><stop offset="1" stop-color="#0a3a32"/></radialGradient><radialGradient id="gB4" cx=".35" cy=".3" r=".8"><stop offset="0" stop-color="#ea9a92"/><stop offset=".5" stop-color="#a8342e"/><stop offset="1" stop-color="#4a1412"/></radialGradient><linearGradient id="gRot" x1="0" y1="0" x2="1" y2="1"><stop offset="0" stop-color="#3a3a3a"/><stop offset=".5" stop-color="#8a8a8a"/><stop offset="1" stop-color="#4a4a4a"/></linearGradient><linearGradient id="gScl" x1="0" y1="0" x2="1" y2="1"><stop offset="0" stop-color="#3c3c3c"/><stop offset="1" stop-color="#8e8e8e"/></linearGradient><linearGradient id="gPiv" x1="0" y1="0" x2="0" y2="1"><stop offset="0" stop-color="#8d8d92"/><stop offset="1" stop-color="#c8c8d0"/></linearGradient></defs><path d="M40.6 74.3A11.7 10.4 0 0 0 17.2 74.3L13 74.1L19.9 88.1L26 74.7L22.6 74.3A6.1 5.8 0 0 1 34.8 74.3Z" fill="url(#gArr)" stroke="#333" stroke-width=".9" stroke-linejoin="round"/><g transform="translate(93.8 0) scale(-1 1)"><path d="M40.6 74.3A11.7 10.4 0 0 0 17.2 74.3L13 74.1L19.9 88.1L26 74.7L22.6 74.3A6.1 5.8 0 0 1 34.8 74.3Z" fill="url(#gArr)" stroke="#333" stroke-width=".9" stroke-linejoin="round"/></g><rect x="101.5" y="63.2" width="11" height="11" fill="url(#gSq)" stroke="#2a2f5a" stroke-width="1.2"/><rect x="117.5" y="81" width="11" height="11" fill="url(#gSq)" stroke="#2a2f5a" stroke-width="1.2"/><g fill="none" stroke="#b8322c" stroke-width="1.4"><ellipse cx="112.5" cy="74.5" rx="2.6" ry="2" transform="rotate(45 112.5 74.5)"/><ellipse cx="115.2" cy="77.6" rx="2.6" ry="2" transform="rotate(45 115.2 77.6)"/><ellipse cx="118" cy="80.6" rx="2.6" ry="2" transform="rotate(45 118 80.6)"/></g><rect x="141.5" y="63.2" width="11" height="11" fill="url(#gSq)" stroke="#2a2f5a" stroke-width="1.2"/><rect x="157.5" y="81" width="11" height="11" fill="url(#gSq)" stroke="#2a2f5a" stroke-width="1.2"/><path d="M150.5 75.5c0-2.5 2-3.5 3.6-2.6" fill="none" stroke="#b8322c" stroke-width="1.6"/><g fill="none" stroke="#d88a84" stroke-width="1" stroke-dasharray="1.2 1.3"><ellipse cx="160.5" cy="71.5" rx="3" ry="2.4"/><ellipse cx="149.5" cy="83.5" rx="3" ry="2.4"/><path d="M160.5 75v5"/></g><ellipse cx="190" cy="69" rx="6.5" ry="5.5" fill="none" stroke="#c8322c" stroke-width="1.3"/><g fill="none" stroke="#1e2c5a" stroke-width="1.5"><path d="M184 72c4-3 7 2 11-1"/><path d="M183.5 80c4-4 7 1 10.5-2"/><path d="M188 90c-1-6 3-8 7-8"/><path d="M196 74c1-6 3-10 9-10"/><path d="M200 78c0-5 2-8 6-8.5"/></g><path d="M194 66L200 82" stroke="#c8322c" stroke-width="1.2"/><rect x="197.7" y="81" width="11" height="11" fill="url(#gSq)" stroke="#2a2f5a" stroke-width="1.2"/><path transform="translate(325.5 66.3) scale(1)" d="M0 0L0 19.4L3.9 18.2L7.3 25.7L10.6 24.4L8.1 16.5L12.3 14.8Z" fill="url(#gCur)" stroke="#222" stroke-width="1.3" stroke-linejoin="round"/><path d="M357 65.4H378M357 68.1H373M357 70.6H366.7M357 73.2H367.9M357 75.7H364M357 78H366.7M357 80.5H366.7M357 83H362.5M357 85.5H365M357 88H367.9M357 90.5H365.6" stroke="#1a1a1a" stroke-width="1.5"/><path transform="translate(372.5 71.5) scale(0.74)" d="M0 0L0 19.4L3.9 18.2L7.3 25.7L10.6 24.4L8.1 16.5L12.3 14.8Z" fill="url(#gCur)" stroke="#222" stroke-width="1.3" stroke-linejoin="round"/><rect x="396.8" y="65.2" width="25" height="25" fill="none" stroke="#111" stroke-width="2.4" stroke-dasharray="2.4 2.1"/><rect x="401" y="69.2" width="17" height="16.5" fill="url(#gSq)" stroke="#9a9ab0" stroke-width=".8"/><path d="M426.3 89.4L426.3 94.4L421.3 94.4Z" fill="#000"/><path d="M420.8 94.9L426.8 88.9" stroke="#fff" stroke-width="1"/><path d="M458 65.2H437.2V90.2H458" fill="none" stroke="#111" stroke-width="2.4" stroke-dasharray="2.4 2.1"/><rect x="441" y="69.2" width="15" height="16.5" fill="url(#gSq)" stroke="#9a9ab0" stroke-width=".8"/><circle cx="457" cy="77.2" r="6.6" fill="#141414"/><circle cx="457" cy="77.2" r="1.7" fill="#fff"/><g transform="translate(497 77.5)" fill="#8b8b8b" stroke="#3a3a3a" stroke-width="1.1" stroke-linejoin="round"><path d="M0 -13L4.2 -8H1.3V-1.3H8V-4.2L13 0L8 4.2V1.3H1.3V8H4.2L0 13L-4.2 8H-1.3V1.3H-8V4.2L-13 0L-8 -4.2V-1.3H-1.3V-8H-4.2Z"/></g><path d="M530.5 69.5A10.3 10.3 0 1 0 546 71" fill="none" stroke="#2e2e2e" stroke-width="5.2"/><path d="M530.5 69.5A10.3 10.3 0 1 0 546 71" fill="none" stroke="url(#gRot)" stroke-width="3.2"/><path d="M526 66L538.8 64.2L534.5 75.5Z" fill="#6a6a6a" stroke="#2e2e2e" stroke-width="1"/><rect x="567.5" y="68" width="19" height="19" fill="url(#gScl)"/><rect x="568.2" y="76.5" width="10.5" height="10" fill="#fff" stroke="#d0343a" stroke-width="1.5"/><path d="M594.1 89.4L594.1 94.4L589.1 94.4Z" fill="#000"/><path d="M588.6 94.9L594.6 88.9" stroke="#fff" stroke-width="1"/><rect x="692.3" y="65.5" width="10.2" height="23" fill="url(#gPiv)" stroke="#1e2c6a" stroke-width="1.2"/><rect x="706.3" y="65.5" width="10.2" height="17.5" fill="url(#gSq)" stroke="#1e2c6a" stroke-width="1.2"/><circle cx="697.4" cy="85" r="3.6" fill="#f2b8b8" stroke="#8a8ab0" stroke-width=".6"/><circle cx="697.4" cy="85" r="2" fill="#e0262c"/><circle cx="711.4" cy="79.5" r="3.6" fill="#f2b8b8" stroke="#8a8ab0" stroke-width=".6"/><circle cx="711.4" cy="79.5" r="2" fill="#e0262c"/><path d="M721.2 89.4L721.2 94.4L716.2 94.4Z" fill="#000"/><path d="M715.7 94.9L721.7 88.9" stroke="#fff" stroke-width="1"/><g stroke="#3a3a3a" stroke-width="1.5"><path d="M752 79V69M752 79L743.5 81.5M752 79L759.5 74M752 79V87"/></g><circle cx="752" cy="68" r="3.2" fill="#f2e45a" stroke="#b0a030" stroke-width=".6"/><circle cx="743" cy="81.5" r="3" fill="url(#gB2)"/><circle cx="759.5" cy="73.8" r="3" fill="url(#gB2)"/><circle cx="752" cy="88" r="3.2" fill="url(#gB2)"/><path d="M778.5 72L791 65L806 70.5L805.5 79.5L793.5 90.5L780 82Z" fill="#7a7a7a" stroke="#2a2a2a" stroke-width="1"/><path d="M778.5 72L791 65L806 70.5L793.8 78.2Z" fill="#f2f2f2" stroke="#2a2a2a" stroke-width=".9"/><path d="M778.5 72L793.8 78.2L793.5 90.5L780 82Z" fill="#c9c9cf" stroke="#2a2a2a" stroke-width=".9"/><path d="M788 69.2L797.5 72.6M792.8 71L790 74.2" stroke="#222" stroke-width="2" fill="none"/><g transform="translate(825 69.4)"><path d="M9.5 20.4L2.8 10A5.6 5.6 0 0 1 12.3 4.2L17.7 13.7" fill="none" stroke="#a8402e" stroke-width="4.4"/><path d="M9.5 20.4L2.8 10A5.6 5.6 0 0 1 12.3 4.2L17.7 13.7" fill="none" stroke="#e8826e" stroke-width="3"/><path d="M9.2 19L2.2 8.6A5.6 5.6 0 0 1 6 3" fill="none" stroke="#f2a896" stroke-width="1"/><rect x="-1.7" y="-1.6" width="3.4" height="3.2" fill="#fff" transform="translate(9.5 20.4) rotate(-33)"/><rect x="-1.7" y="-1.6" width="3.4" height="3.2" fill="#fff" transform="translate(17.7 13.7) rotate(-30)"/></g><path d="M857.3 89.8L857.3 94.8L852.3 94.8Z" fill="#000"/><path d="M851.8 95.3L857.8 89.3" stroke="#fff" stroke-width="1"/><g transform="translate(865 69.4)"><path d="M9.5 20.4L2.8 10A5.6 5.6 0 0 1 12.3 4.2L17.7 13.7" fill="none" stroke="#a8402e" stroke-width="4.4"/><path d="M9.5 20.4L2.8 10A5.6 5.6 0 0 1 12.3 4.2L17.7 13.7" fill="none" stroke="#e8826e" stroke-width="3"/><path d="M9.2 19L2.2 8.6A5.6 5.6 0 0 1 6 3" fill="none" stroke="#f2a896" stroke-width="1"/><rect x="-1.7" y="-1.6" width="3.4" height="3.2" fill="#fff" transform="translate(9.5 20.4) rotate(-33)"/><rect x="-1.7" y="-1.6" width="3.4" height="3.2" fill="#fff" transform="translate(17.7 13.7) rotate(-30)"/></g><path d="M866 87.5H894M866 87.5L881.5 66" stroke="#111" stroke-width="1.4" fill="none"/><path d="M881 68.5A22 22 0 0 1 891.5 86" stroke="#111" stroke-width="1.3" fill="none"/><path d="M879.5 66.5l4.8 0.6-2.6 3.6zM889.2 84.2l4.3-.4-2 3.6z" fill="#111"/><g transform="translate(904.5 69.4)"><path d="M9.5 20.4L2.8 10A5.6 5.6 0 0 1 12.3 4.2L17.7 13.7" fill="none" stroke="#a8402e" stroke-width="4.4"/><path d="M9.5 20.4L2.8 10A5.6 5.6 0 0 1 12.3 4.2L17.7 13.7" fill="none" stroke="#e8826e" stroke-width="3"/><path d="M9.2 19L2.2 8.6A5.6 5.6 0 0 1 6 3" fill="none" stroke="#f2a896" stroke-width="1"/><rect x="-1.7" y="-1.6" width="3.4" height="3.2" fill="#fff" transform="translate(9.5 20.4) rotate(-33)"/><rect x="-1.7" y="-1.6" width="3.4" height="3.2" fill="#fff" transform="translate(17.7 13.7) rotate(-30)"/></g><g transform="translate(945 69.4)"><path d="M9.5 20.4L2.8 10A5.6 5.6 0 0 1 12.3 4.2L17.7 13.7" fill="none" stroke="#a8402e" stroke-width="4.4"/><path d="M9.5 20.4L2.8 10A5.6 5.6 0 0 1 12.3 4.2L17.7 13.7" fill="none" stroke="#e8826e" stroke-width="3"/><path d="M9.2 19L2.2 8.6A5.6 5.6 0 0 1 6 3" fill="none" stroke="#f2a896" stroke-width="1"/><rect x="-1.7" y="-1.6" width="3.4" height="3.2" fill="#fff" transform="translate(9.5 20.4) rotate(-33)"/><rect x="-1.7" y="-1.6" width="3.4" height="3.2" fill="#fff" transform="translate(17.7 13.7) rotate(-30)"/></g><rect x="963" y="63" width="11" height="20" fill="#d8d8d8" stroke="#555" stroke-width="1"/><path d="M963 73H974" stroke="#555" stroke-width="1"/><path d="M965 70L968.5 65.8L972 70Z M965 76L968.5 80.2L972 76Z" fill="#111"/><path transform="translate(1010.8 67) scale(0.9)" d="M0 0L0 19.4L3.9 18.2L7.3 25.7L10.6 24.4L8.1 16.5L12.3 14.8Z" fill="url(#gCur)" stroke="#222" stroke-width="1.3" stroke-linejoin="round"/><path d="M1192 66.5L1201.5 77.5L1192 88.5Z" fill="#2f6a72" stroke="#16343a" stroke-width=".9"/><path d="M1217 66.5L1207.5 77.5L1217 88.5Z" fill="#9db4c6" stroke="#4a5a6a" stroke-width=".9"/><path d="M1204.5 64V90.5" stroke="#dc8a84" stroke-width="2.4"/><path d="M1239.5 69L1249 78.3L1239.5 87.5L1230.3 78.3Z" fill="#3f7f88" stroke="#16343a" stroke-width=".9"/><path d="M1251.5 63.5L1258.7 70.5L1251.5 77.5L1244.3 70.5Z" fill="#b6cbe0" stroke="#4a5a6a" stroke-width=".9"/><path d="M1241 90.5L1259 72.5" stroke="#dc8a84" stroke-width="2.2"/><path d="M1261.2 89.4L1261.2 94.4L1256.2 94.4Z" fill="#000"/><path d="M1255.7 94.9L1261.7 88.9" stroke="#fff" stroke-width="1"/><path d="M1279 80L1297 80L1305 88L1287 88Z" fill="#fff" stroke="#111" stroke-width="1.5" stroke-linejoin="round"/><path d="M1279 73L1297 73L1305 81L1287 81Z" fill="#fff" stroke="#111" stroke-width="1.5" stroke-linejoin="round"/><path d="M1279 66L1297 66L1305 74L1287 74Z" fill="#fff" stroke="#111" stroke-width="1.5" stroke-linejoin="round"/><rect x="1325" y="68" width="26.5" height="21.5" fill="#fff" stroke="#3a3a9a" stroke-width="1"/><rect x="1325" y="68" width="26.5" height="3.6" fill="#5a4fd0"/><path d="M1326 75.5H1351M1326 80H1351M1326 84.5H1351" stroke="#b8b8c8" stroke-width=".8"/><path d="M1333 72V89" stroke="#9a9aa8" stroke-width=".8"/><path d="M1344.5 72V89" stroke="#3fae3f" stroke-width="1.2"/><path d="M1327 74h4M1327 78h4M1327 82h4M1327 86.5h4" stroke="#2a2a9a" stroke-width="1.4"/><path d="M1334 80l3-2 2-2.5 2 1.5 2-2" stroke="#d03030" stroke-width="1.2" fill="none"/><rect x="1366.8" y="64.8" width="26" height="25.5" fill="#c9c9c9" stroke="#111" stroke-width="1.6"/><rect x="1370.5" y="67.5" width="18.5" height="5.5" fill="#f2dc2a" stroke="#111" stroke-width="1.1"/><rect x="1370.5" y="81" width="18.5" height="6.8" fill="#9a9a9a" stroke="#111" stroke-width="1.1"/><path d="M1379.8 73.5V77M1376 76.5H1383.6L1379.8 80.5Z" stroke="#d0262a" stroke-width="1.4" fill="#d0262a"/><circle cx="1419.7" cy="70.3" r="6.5" fill="url(#gB1)"/><circle cx="1434.2" cy="70.3" r="6.5" fill="url(#gB2)"/><circle cx="1419.7" cy="84.2" r="6.5" fill="url(#gB3)"/><circle cx="1434.2" cy="84.2" r="6.5" fill="url(#gB4)"/><rect x="1459.8" y="63.2" width="18" height="10.2" fill="#fff" stroke="#8a8ab8" stroke-width="1"/><rect x="1459.8" y="63.2" width="18" height="3" fill="#4a3fd0"/><g transform="translate(1474.5 82.5)"><path d="M-8 -1C-11 -2 -13 -5 -14.5 -7.5L-13 -8C-11 -5 -9.5 -4 -7.5 -3.5Z" fill="#3f8f98" stroke="#1d4a52" stroke-width=".8"/><path d="M8 -4C13 -6.5 14.5 -3 12.5 0C11 2.5 9 3.5 7 4" fill="none" stroke="#1d4a52" stroke-width="2.6"/><path d="M8 -4C13 -6.5 14.5 -3 12.5 0C11 2.5 9 3.5 7 4" fill="none" stroke="#6fbac3" stroke-width="1.1"/><ellipse cx="0" cy="0.5" rx="9.3" ry="7" fill="url(#gTea)" stroke="#1d4a52" stroke-width=".8"/><path d="M-6.5 -4.5Q0 -8.5 6.5 -4.5" fill="none" stroke="#1d4a52" stroke-width=".8"/><ellipse cx="0" cy="-7.3" rx="2" ry="1.4" fill="#58a7b1" stroke="#1d4a52" stroke-width=".7"/></g><g transform="translate(1615 82.5)"><path d="M-8 -1C-11 -2 -13 -5 -14.5 -7.5L-13 -8C-11 -5 -9.5 -4 -7.5 -3.5Z" fill="#3f8f98" stroke="#1d4a52" stroke-width=".8"/><path d="M8 -4C13 -6.5 14.5 -3 12.5 0C11 2.5 9 3.5 7 4" fill="none" stroke="#1d4a52" stroke-width="2.6"/><path d="M8 -4C13 -6.5 14.5 -3 12.5 0C11 2.5 9 3.5 7 4" fill="none" stroke="#6fbac3" stroke-width="1.1"/><ellipse cx="0" cy="0.5" rx="9.3" ry="7" fill="url(#gTea)" stroke="#1d4a52" stroke-width=".8"/><path d="M-6.5 -4.5Q0 -8.5 6.5 -4.5" fill="none" stroke="#1d4a52" stroke-width=".8"/><ellipse cx="0" cy="-7.3" rx="2" ry="1.4" fill="#58a7b1" stroke="#1d4a52" stroke-width=".7"/></g><path d="M1631.2 89.4L1631.2 94.4L1626.2 94.4Z" fill="#000"/><path d="M1625.7 94.9L1631.7 88.9" stroke="#fff" stroke-width="1"/></svg>
<div class="t" style="left:843.5px;top:63.5px;font-size:13px;color:#111;font-weight:bold;">3</div>
<div class="t" style="left:918px;top:61px;font-size:17px;color:#111;font-weight:bold;">%</div>
<div class="t" style="left:992px;top:63px;font-size:17px;color:#555;letter-spacing:2.328px;">{}</div>
<div class="t" style="left:992.5px;top:84px;font-size:7.5px;color:#555;font-weight:bold;letter-spacing:-0.089px;">ABC</div>
<svg style="left:0px;top:0px" width="1912" height="440" viewBox="0 0 1912 440" ><defs><linearGradient id="gTube" x1="0" y1="0" x2="1" y2="1"><stop offset="0" stop-color="#9fb0d6"/><stop offset=".5" stop-color="#3a4a78"/><stop offset="1" stop-color="#10162e"/></linearGradient><radialGradient id="gSpark" cx=".5" cy=".5" r=".5"><stop offset="0" stop-color="#ffffff"/><stop offset=".45" stop-color="#fff6c8"/><stop offset="1" stop-color="#fff6c8" stop-opacity="0"/></radialGradient><linearGradient id="gHam" x1="0" y1="0" x2="0" y2="1"><stop offset="0" stop-color="#f0f0f0"/><stop offset="1" stop-color="#555"/></linearGradient></defs><circle cx="1637.8" cy="115" r="7" fill="url(#gSpark)"/><path d="M1637.8 106.5V123.5M1629.5 115H1646M1632 109.2L1643.6 120.8M1643.6 109.2L1632 120.8" stroke="#fffbe6" stroke-width="1.1"/><path transform="translate(1638.3 116) rotate(-18) scale(.74)" d="M0 0L0 19.4L3.9 18.2L7.3 25.7L10.6 24.4L8.1 16.5L12.3 14.8Z" fill="#ececec" stroke="#222" stroke-width="1.5" stroke-linejoin="round"/><rect x="1666.2" y="110.6" width="21.3" height="20.9" fill="none" stroke="#8a8a8a" stroke-width=".7"/><circle cx="1666.2" cy="110.6" r="1.2" fill="#111"/><circle cx="1687.5" cy="131.5" r="1.2" fill="#111"/><path d="M1667.5 130.5C1668 119.5 1675.5 112 1687 111.5L1687 119C1680 119.5 1675.5 124 1675 130.5Z" fill="url(#gTube)" stroke="#1a2040" stroke-width=".8"/><path d="M1670.3 130C1671 121.5 1677.5 114.8 1686.5 114.3" fill="none" stroke="#c3cfee" stroke-width="1.2"/><g stroke="#55555f" stroke-width="1.3" fill="none"><path d="M1713.4 118V127.5M1713.4 120.5L1704 127.5M1713.4 120.5L1722.6 127.5"/></g><rect x="1709" y="109.5" width="8.8" height="8.4" fill="#ececf8" stroke="#55556a" stroke-width="1.2"/><rect x="1700.9" y="127.3" width="5.4" height="5" fill="#f4f4fc" stroke="#55556a" stroke-width="1.1"/><rect x="1710.7" y="127.3" width="5.4" height="5" fill="#f4f4fc" stroke="#55556a" stroke-width="1.1"/><rect x="1719.9" y="127.3" width="5.4" height="5" fill="#f4f4fc" stroke="#55556a" stroke-width="1.1"/><circle cx="1752.5" cy="121" r="8.3" fill="#d8d8d8" stroke="#111" stroke-width="2.6"/><g stroke="#d83030" stroke-width="1"><path d="M1752.5 114.5V127.5M1746 121H1759M1748 116.5L1757 125.5M1757 116.5L1748 125.5"/></g><circle cx="1752.5" cy="121" r="1.3" fill="#d83030"/><path d="M1743.5 113A12 12 0 0 0 1743.5 129M1741 114A12 12 0 0 0 1741 128M1738.6 115.5A12 12 0 0 0 1738.6 126.5" fill="none" stroke="#5a5a5a" stroke-width="1.1"/><rect x="1774" y="111.2" width="23.6" height="17.6" rx="1.5" fill="#fff" stroke="#1c1c1c" stroke-width="2.4"/><path d="M1781 131.5H1791" stroke="#1c1c1c" stroke-width="2"/><path d="M1778 133H1794" stroke="#3a3a3a" stroke-width="1.4"/><path d="M1784 132.3h4" stroke="#3fae3f" stroke-width="1"/><rect x="1779" y="113.8" width="4" height="9.5" fill="#5a62b8" stroke="#2a2f7a" stroke-width=".7"/><path d="M1789 113.5L1793.3 124.6H1784.6Z" fill="#d83030"/><path d="M1812.3 115.2C1813 112 1816 110.2 1819.5 110.2H1826V109.6H1830.8V116.2H1826V114.8H1824V116.2H1819V114C1816.5 113.6 1814.5 114.2 1812.3 115.2Z" fill="url(#gHam)" stroke="#222" stroke-width=".8" stroke-linejoin="round"/><path d="M1819.6 116H1823.4L1823.8 126H1819.4Z" fill="#b8443a" stroke="#4a1a14" stroke-width=".7"/><path d="M1819.3 125.5H1823.9L1824.4 133.5H1818.9Z" fill="#1a1a1a"/><path d="M1642 398.7H1653" stroke="#111" stroke-width="1.8"/><path d="M1652.5 392.5V405M1661.5 392.5V405" stroke="#111" stroke-width="1.8"/><path d="M1653 395.2H1661V402.4H1653Z" fill="#e6e6e6" stroke="#111" stroke-width="1.4"/><path d="M1693.4 392.2H1704L1702 394.8V409H1695.6V394.8Z" fill="#fff"/><path d="M1692.8 392.4H1695L1696 394.8V409.2M1704.6 392.4H1702.4L1701.4 394.8V409.2" fill="none" stroke="#111" stroke-width="1.7"/><g fill="none" stroke="#a2a2a2" stroke-width="1.2"><path d="M1734 392L1741 402M1751 392L1744 402"/><path d="M1742.5 400.5L1746 404L1742.5 407.8L1739 404Z"/></g><g fill="none" stroke="#f0f0f0" stroke-width=".8"><path d="M1735.2 392L1742.2 402M1752.2 392L1745.2 402"/></g><g fill="none" stroke="#a2a2a2" stroke-width="1.2"><path d="M1767.5 398.5C1767.5 396 1776.5 396 1776.5 398.5V406C1776.5 409 1767.5 409 1767.5 406Z"/><path d="M1767.5 399C1769 401 1775 401 1776.5 399"/><path d="M1770 396C1769.5 392.5 1775 392 1775.5 394.5"/></g><path d="M1768.6 399.5V407.5" stroke="#f0f0f0" stroke-width=".8"/><rect x="1808.5" y="391.5" width="14.5" height="15" fill="#fff" stroke="#1a1a9a" stroke-width="1.3"/><rect x="1808" y="391" width="15.5" height="4" fill="#1a1a9a"/><rect x="1812" y="399" width="4" height="3.6" fill="#d0d0d0" stroke="#555" stroke-width=".8"/><rect x="1817" y="399" width="4" height="3.6" fill="#d0d0d0" stroke="#555" stroke-width=".8"/><rect x="1822" y="399" width="4" height="3.6" fill="#d0d0d0" stroke="#555" stroke-width=".8"/><rect x="1812" y="404" width="4" height="3.6" fill="#d0d0d0" stroke="#555" stroke-width=".8"/><rect x="1817" y="404" width="4" height="3.6" fill="#d0d0d0" stroke="#555" stroke-width=".8"/><rect x="1822" y="404" width="4" height="3.6" fill="#d0d0d0" stroke="#555" stroke-width=".8"/></svg>
<svg style="left:0px;top:0px" width="1912" height="1030" viewBox="0 0 1912 1030" ><defs><radialGradient id="gLens" cx=".35" cy=".35" r=".8"><stop offset="0" stop-color="#ffffff"/><stop offset="1" stop-color="#c4c4d0"/></radialGradient></defs><path d="M1812.56 985.26L1818.5 992.3" stroke="#1e1e7a" stroke-width="3.4" stroke-linecap="round"/><path d="M1813.14 985.84L1818.5 992.3" stroke="#6a6ad0" stroke-width="1.2" stroke-linecap="round"/><circle cx="1808.5" cy="981.2" r="5.8" fill="url(#gLens)" stroke="#22227a" stroke-width="1.5"/><g fill="#e8cfcf" stroke="#b03a3a" stroke-width="1.3"><rect x="1834" y="976" width="7.2" height="5.8"/><rect x="1841.2" y="976" width="7.2" height="5.8"/><rect x="1834" y="981.8" width="7.2" height="5.8"/><rect x="1841.2" y="981.8" width="7.2" height="5.8"/></g><path d="M1837.58 989.68L1842.5 993.2" stroke="#1e1e7a" stroke-width="3.4" stroke-linecap="round"/><path d="M1838.02 990.12L1842.5 993.2" stroke="#6a6ad0" stroke-width="1.2" stroke-linecap="round"/><circle cx="1834.5" cy="986.6" r="4.4" fill="url(#gLens)" stroke="#22227a" stroke-width="1.5"/><g fill="none" stroke="#111" stroke-width="1.7"><path d="M1859 980V976.2H1863M1873.5 976.2H1877.3V980M1877.3 989V992.6H1873.5M1863 992.6H1859V989"/></g><path d="M1862 981.5L1865.5 978H1875V987L1871.5 990.5H1862Z" fill="#d4d4ea" stroke="#2a2a8a" stroke-width="1.2"/><path d="M1862 981.5H1871.5V990.5M1871.5 981.5L1875 978" fill="none" stroke="#2a2a8a" stroke-width="1.2"/><path d="M1871.5 981.5L1875 978V987L1871.5 990.5Z" fill="#6a6ab8"/><path d="M1881 990L1881 995L1876 995Z" fill="#000"/><path d="M1875.5 995.5L1881.5 989.5" stroke="#fff" stroke-width="1"/><g fill="#e8cfcf" stroke="#b03a3a" stroke-width="1.3"><rect x="1891.8" y="976" width="7" height="5.8"/><rect x="1898.8" y="976" width="7" height="5.8"/><rect x="1891.8" y="981.8" width="7" height="5.8"/><rect x="1898.8" y="981.8" width="7" height="5.8"/></g><path d="M1887.5 985.5L1890 983H1898V990.5L1895.5 993H1887.5Z" fill="#d4d4ea" stroke="#2a2a8a" stroke-width="1.2"/><path d="M1887.5 985.5H1895.5V993M1895.5 985.5L1898 983" fill="none" stroke="#2a2a8a" stroke-width="1.2"/><path d="M1910 990L1910 995L1905 995Z" fill="#000"/><path d="M1904.5 995.5L1910.5 989.5" stroke="#fff" stroke-width="1"/><rect x="1772.8" y="1005" width="11" height="11" fill="#d8d8d8" stroke="#111" stroke-width="1.5"/><path d="M1772.8 1006.5H1783.8" stroke="#111" stroke-width="2"/><circle cx="1782.7" cy="1013.3" r="4.8" fill="#d8d8d8" stroke="#c03030" stroke-width="1.4"/><path d="M1782.7 1010V1013.5H1785.5M1780 1013.5H1782" stroke="#111" stroke-width="1.3" fill="none"/><rect x="1801.8" y="1003.6" width="18" height="16.6" fill="#dedede" stroke="#111" stroke-width="1.6" stroke-dasharray="3 1.6"/><path d="M1810.95 1012.95L1815.5 1017.5" stroke="#1e1e7a" stroke-width="3.4" stroke-linecap="round"/><path d="M1811.4 1013.4L1815.5 1017.5" stroke="#6a6ad0" stroke-width="1.2" stroke-linecap="round"/><circle cx="1807.8" cy="1009.8" r="4.5" fill="url(#gLens)" stroke="#22227a" stroke-width="1.5"/><path d="M1834 1012C1832 1010.5 1830.2 1011.5 1831.5 1013.5L1836.5 1020.5H1845.5C1847.5 1018 1848.8 1015 1848.6 1010.5C1848.5 1008.3 1846.3 1008.3 1846.2 1010V1007.5C1846.1 1005.3 1843.8 1005.3 1843.7 1007.5V1005.5C1843.6 1003.3 1841.2 1003.3 1841.1 1005.5V1007C1841 1004.6 1838.5 1004.6 1838.4 1007V1014.5Z" fill="#f6f6f6" stroke="#111" stroke-width="1.2" stroke-linejoin="round"/><path d="M1841.1 1007V1011M1843.7 1007.5V1011M1846.2 1010V1012" stroke="#111" stroke-width="1"/><circle cx="1866.5" cy="1013" r="5.6" fill="none" stroke="#111" stroke-width="1.4"/><path d="M1866.5 1013V1004M1866.5 1013H1876M1866.5 1013L1859.5 1019.8" stroke="#2a2a8a" stroke-width="1.5" fill="none"/><path d="M1866.5 1002.2l2.4 3.6h-4.8zM1878 1013l-3.6 2.4v-4.8zM1858 1021.2l.8-4.2 3.2 3.2z" fill="#111"/><path d="M1881 1018L1881 1023L1876 1023Z" fill="#000"/><path d="M1875.5 1023.5L1881.5 1017.5" stroke="#fff" stroke-width="1"/><rect x="1897.8" y="1012.8" width="8.4" height="7.2" fill="none" stroke="#111" stroke-width="1.5"/><rect x="1889.3" y="1003.6" width="12.8" height="12.2" fill="#d6d6e6" stroke="#3a3a9a" stroke-width="1.6"/><path d="M1892.5 1006.5L1899 1013M1892.2 1006.2h3.2M1892.2 1006.2v3.2" stroke="#111" stroke-width="1.3" fill="none"/><path d="M1725.5 991L1725.5 996L1720.5 996Z" fill="#000"/><path d="M1720 996.5L1726 990.5" stroke="#fff" stroke-width="1"/><path d="M1492 1019H1510" stroke="#3a3a9a" stroke-width="1"/><path d="M1492 1021C1496 1021 1497 1004 1500.5 1004C1504 1004 1503 1016 1510 1006" fill="none" stroke="#d03030" stroke-width="1.5"/><path d="M1512 1019L1512 1024L1507 1024Z" fill="#000"/><path d="M1506.5 1024.5L1512.5 1018.5" stroke="#fff" stroke-width="1"/><g fill="#e4e4e4" stroke="#b0b0b0" stroke-width="1"><path d="M1213 1011C1214 1017 1220 1021 1226 1019Z"/><path d="M1219 1021L1217 1025H1224L1222 1020.5"/><path d="M1220 1015L1225 1009" /><circle cx="1225.5" cy="1008.5" r="1.5"/></g></svg>
<div class="a" style="left:795px;top:319px;width:325px;height:390px;background:#c5c5c5;border:1px solid #0e141c;border-radius:6px 6px 1px 1px;box-shadow:inset 1px 1px 0 #e6edf5, inset 2px 0 0 #dde5ef, inset 3px 0 0 #c8d1dc, inset -1px -1px 0 #98d2ee;"></div>
<div class="a" style="left:797px;top:321px;width:321px;height:30px;background:linear-gradient(#9dbadb 0%,#a9c4e2 30%,#b6cfe9 70%,#c2d7ee 100%);border-radius:4px 4px 0 0;"></div>
<div class="a" style="left:797px;top:321px;width:321px;height:1px;background:#c9e4f5;border-radius:4px 4px 0 0;"></div>
<div class="t" style="left:804px;top:329px;font-size:15px;color:#000;letter-spacing:-0.520px;">Export STL File</div>
<div class="a" style="left:1074px;top:325px;width:40px;height:23px;background:linear-gradient(#eeb5a6 0%,#e49683 45%,#c94a2c 46%,#cf5a3c 75%,#dd8268 100%);border:1px solid #47394a;border-radius:3.5px;box-shadow:inset 0 0 0 1px rgba(255,225,215,.55);"></div><svg style="left:1074px;top:325px" width="40" height="23" viewBox="0 0 40 23" ><path d="M16.3 8.355L23.7 14.645M23.7 8.355L16.3 14.645" stroke="#5a4048" stroke-width="4.6" stroke-linecap="square" fill="none"/><path d="M16.3 8.355L23.7 14.645M23.7 8.355L16.3 14.645" stroke="#fff" stroke-width="2.8" stroke-linecap="square" fill="none"/></svg>
<div class="a" style="left:814px;top:370px;width:280px;height:230px;background:transparent;border:1px solid #8e8e8e;box-shadow:1px 1px 0 #d6d6d6, inset 1px 1px 0 #d6d6d6;"></div>
<div class="a" style="left:822px;top:362px;width:54px;height:16px;background:#c5c5c5;"></div>
<div class="t" style="left:825px;top:364px;font-size:13px;color:#111;letter-spacing:0.127px;">Settings</div>
<div class="t" style="left:839px;top:396px;font-size:17px;color:#000;font-weight:bold;letter-spacing:-0.139px;">Object name:</div>
<div class="a" style="left:833px;top:423px;width:239px;height:39px;background:#e1e1e1;border-top:1px solid #7a7a7a;border-left:1px solid #7a7a7a;border-right:1px solid #fafafa;border-bottom:1px solid #fafafa;"></div>
<div class="t" style="left:837px;top:429px;font-size:17px;color:#000;font-weight:bold;letter-spacing:-0.350px;">Object01</div>
<svg style="left:877px;top:480px" width="16" height="16" viewBox="0 0 16 16" ><circle cx="8" cy="8" r="5.6" fill="#e4e4e4"/><path d="M3.6 11.5A5.6 5.6 0 0 1 11.8 3.8" stroke="#555" stroke-width="1.5" fill="none"/><path d="M12.2 4.4A5.6 5.6 0 0 1 4.2 12.2" stroke="#fafafa" stroke-width="1.3" fill="none"/></svg>
<svg style="left:877px;top:518px" width="16" height="16" viewBox="0 0 16 16" ><circle cx="8" cy="8" r="5.6" fill="#e4e4e4"/><path d="M3.6 11.5A5.6 5.6 0 0 1 11.8 3.8" stroke="#555" stroke-width="1.5" fill="none"/><path d="M12.2 4.4A5.6 5.6 0 0 1 4.2 12.2" stroke="#fafafa" stroke-width="1.3" fill="none"/><circle cx="8" cy="8" r="2.7" fill="#000"/></svg>
<div class="t" style="left:899px;top:482px;font-size:13px;color:#111;letter-spacing:0.357px;">Binary</div>
<div class="t" style="left:899px;top:519px;font-size:13px;color:#111;letter-spacing:-0.191px;">ASCII</div>
<div class="sunk" style="left:877px;top:560.5px;width:16px;height:16px;background:#e5e5e5;border-top-color:#6c6c6c;border-left-color:#6c6c6c"></div><svg style="left:877px;top:560.5px" width="16" height="16" viewBox="0 0 16 16" ><path d="M4.4 7.6L7.3 10.8L12.4 4.6" stroke="#000" stroke-width="2.6" fill="none"/></svg>
<div class="t" style="left:899px;top:560px;font-size:13px;color:#111;letter-spacing:0.225px;">Selected only</div>
<div class="t" style="left:814px;top:621px;font-size:17px;color:#000;font-weight:bold;letter-spacing:-0.129px;">Copyright 1996</div>
<div class="t" style="left:814px;top:641px;font-size:17px;color:#000;font-weight:bold;letter-spacing:-0.467px;">CEBAS Computer</div>
<div class="t" style="left:814px;top:661px;font-size:17px;color:#000;font-weight:bold;letter-spacing:-0.098px;">Germany</div>
<div class="raised" style="left:972px;top:617px;width:124px;height:34px;border-right:1px solid #7a7a7a;border-bottom:1px solid #7a7a7a;"></div>
<div class="t" style="left:1022px;top:626px;font-size:13px;color:#111;letter-spacing:0.609px;">OK</div>
<div class="raised" style="left:972px;top:657px;width:124px;height:34px;border-right:1px solid #7a7a7a;border-bottom:1px solid #7a7a7a;"></div>
<div class="t" style="left:1011px;top:666px;font-size:13px;color:#111;letter-spacing:0.253px;">Cancel</div></body></html>
